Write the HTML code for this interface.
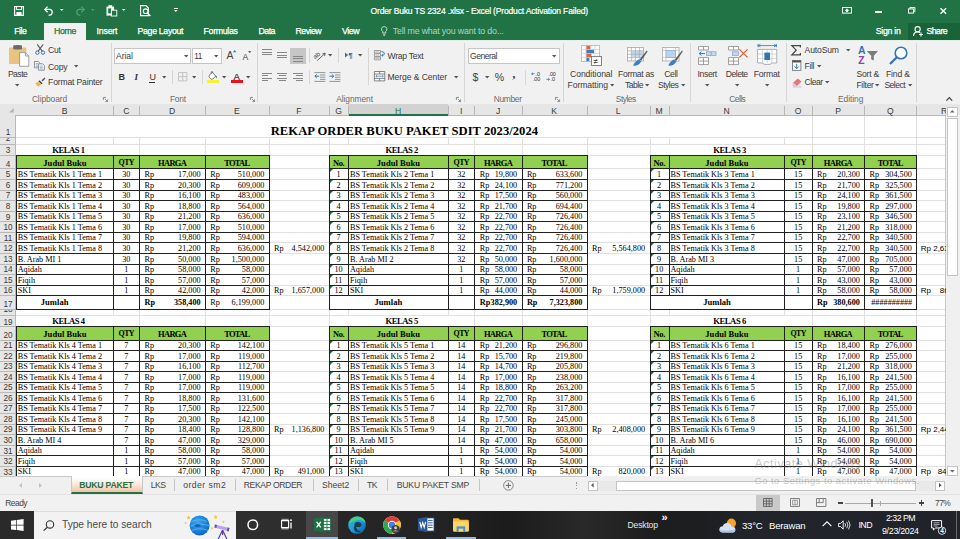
<!DOCTYPE html>
<html lang="id"><head><meta charset="utf-8"><title>Order Buku TS 2324 .xlsx - Excel</title>
<style>
html,body{margin:0;padding:0;}
body{width:960px;height:539px;overflow:hidden;position:relative;background:#fff;font-family:'Liberation Sans',sans-serif;}
div{position:absolute;box-sizing:border-box;}
.t{position:absolute;white-space:pre;line-height:1;}
svg{position:absolute;overflow:visible;}
.c{position:absolute;white-space:pre;line-height:1;font-family:'Liberation Serif',serif;font-size:8.2px;color:#000;}

</style></head><body>
<div style="left:0px;top:104px;width:946px;height:372px;background:#fff;overflow:hidden;"></div>
<div style="left:0px;top:104px;width:960px;height:12px;background:#e6e6e6;border-bottom:1px solid #b8b8b8;"></div>
<div style="left:0px;top:115px;width:16px;height:361px;background:#e6e6e6;border-right:1px solid #b8b8b8;"></div>
<div style="left:348px;top:104px;width:100px;height:12px;background:#d2d2d2;border-bottom:2px solid #217346;"></div>
<div style="left:113px;top:115px;width:1px;height:361px;background:#e0e0e0;"></div>
<div style="left:113px;top:106px;width:1px;height:10px;background:#b8b8b8;"></div>
<div style="left:139px;top:115px;width:1px;height:361px;background:#e0e0e0;"></div>
<div style="left:139px;top:106px;width:1px;height:10px;background:#b8b8b8;"></div>
<div style="left:205px;top:115px;width:1px;height:361px;background:#e0e0e0;"></div>
<div style="left:205px;top:106px;width:1px;height:10px;background:#b8b8b8;"></div>
<div style="left:269px;top:115px;width:1px;height:361px;background:#e0e0e0;"></div>
<div style="left:269px;top:106px;width:1px;height:10px;background:#b8b8b8;"></div>
<div style="left:329px;top:115px;width:1px;height:361px;background:#e0e0e0;"></div>
<div style="left:329px;top:106px;width:1px;height:10px;background:#b8b8b8;"></div>
<div style="left:348px;top:115px;width:1px;height:361px;background:#e0e0e0;"></div>
<div style="left:348px;top:106px;width:1px;height:10px;background:#b8b8b8;"></div>
<div style="left:448px;top:115px;width:1px;height:361px;background:#e0e0e0;"></div>
<div style="left:448px;top:106px;width:1px;height:10px;background:#b8b8b8;"></div>
<div style="left:474px;top:115px;width:1px;height:361px;background:#e0e0e0;"></div>
<div style="left:474px;top:106px;width:1px;height:10px;background:#b8b8b8;"></div>
<div style="left:522px;top:115px;width:1px;height:361px;background:#e0e0e0;"></div>
<div style="left:522px;top:106px;width:1px;height:10px;background:#b8b8b8;"></div>
<div style="left:587px;top:115px;width:1px;height:361px;background:#e0e0e0;"></div>
<div style="left:587px;top:106px;width:1px;height:10px;background:#b8b8b8;"></div>
<div style="left:650px;top:115px;width:1px;height:361px;background:#e0e0e0;"></div>
<div style="left:650px;top:106px;width:1px;height:10px;background:#b8b8b8;"></div>
<div style="left:669px;top:115px;width:1px;height:361px;background:#e0e0e0;"></div>
<div style="left:669px;top:106px;width:1px;height:10px;background:#b8b8b8;"></div>
<div style="left:784px;top:115px;width:1px;height:361px;background:#e0e0e0;"></div>
<div style="left:784px;top:106px;width:1px;height:10px;background:#b8b8b8;"></div>
<div style="left:812px;top:115px;width:1px;height:361px;background:#e0e0e0;"></div>
<div style="left:812px;top:106px;width:1px;height:10px;background:#b8b8b8;"></div>
<div style="left:864px;top:115px;width:1px;height:361px;background:#e0e0e0;"></div>
<div style="left:864px;top:106px;width:1px;height:10px;background:#b8b8b8;"></div>
<div style="left:916px;top:115px;width:1px;height:361px;background:#e0e0e0;"></div>
<div style="left:916px;top:106px;width:1px;height:10px;background:#b8b8b8;"></div>
<div style="left:946px;top:115px;width:1px;height:361px;background:#e0e0e0;"></div>
<div style="left:946px;top:106px;width:1px;height:10px;background:#b8b8b8;"></div>
<div style="left:16px;top:137px;width:930px;height:1px;background:#e0e0e0;"></div>
<div style="left:0px;top:137px;width:16px;height:1px;background:#b8b8b8;"></div>
<div style="left:16px;top:144px;width:930px;height:1px;background:#e0e0e0;"></div>
<div style="left:0px;top:144px;width:16px;height:1px;background:#b8b8b8;"></div>
<div style="left:16px;top:155px;width:930px;height:1px;background:#e0e0e0;"></div>
<div style="left:0px;top:155px;width:16px;height:1px;background:#b8b8b8;"></div>
<div style="left:16px;top:168px;width:930px;height:1px;background:#e0e0e0;"></div>
<div style="left:0px;top:168px;width:16px;height:1px;background:#b8b8b8;"></div>
<div style="left:16px;top:179px;width:930px;height:1px;background:#e0e0e0;"></div>
<div style="left:0px;top:179px;width:16px;height:1px;background:#b8b8b8;"></div>
<div style="left:16px;top:190px;width:930px;height:1px;background:#e0e0e0;"></div>
<div style="left:0px;top:190px;width:16px;height:1px;background:#b8b8b8;"></div>
<div style="left:16px;top:200px;width:930px;height:1px;background:#e0e0e0;"></div>
<div style="left:0px;top:200px;width:16px;height:1px;background:#b8b8b8;"></div>
<div style="left:16px;top:211px;width:930px;height:1px;background:#e0e0e0;"></div>
<div style="left:0px;top:211px;width:16px;height:1px;background:#b8b8b8;"></div>
<div style="left:16px;top:221px;width:930px;height:1px;background:#e0e0e0;"></div>
<div style="left:0px;top:221px;width:16px;height:1px;background:#b8b8b8;"></div>
<div style="left:16px;top:232px;width:930px;height:1px;background:#e0e0e0;"></div>
<div style="left:0px;top:232px;width:16px;height:1px;background:#b8b8b8;"></div>
<div style="left:16px;top:242px;width:930px;height:1px;background:#e0e0e0;"></div>
<div style="left:0px;top:242px;width:16px;height:1px;background:#b8b8b8;"></div>
<div style="left:16px;top:253px;width:930px;height:1px;background:#e0e0e0;"></div>
<div style="left:0px;top:253px;width:16px;height:1px;background:#b8b8b8;"></div>
<div style="left:16px;top:264px;width:930px;height:1px;background:#e0e0e0;"></div>
<div style="left:0px;top:264px;width:16px;height:1px;background:#b8b8b8;"></div>
<div style="left:16px;top:274px;width:930px;height:1px;background:#e0e0e0;"></div>
<div style="left:0px;top:274px;width:16px;height:1px;background:#b8b8b8;"></div>
<div style="left:16px;top:285px;width:930px;height:1px;background:#e0e0e0;"></div>
<div style="left:0px;top:285px;width:16px;height:1px;background:#b8b8b8;"></div>
<div style="left:16px;top:295px;width:930px;height:1px;background:#e0e0e0;"></div>
<div style="left:0px;top:295px;width:16px;height:1px;background:#b8b8b8;"></div>
<div style="left:16px;top:309px;width:930px;height:1px;background:#e0e0e0;"></div>
<div style="left:0px;top:309px;width:16px;height:1px;background:#b8b8b8;"></div>
<div style="left:16px;top:315px;width:930px;height:1px;background:#e0e0e0;"></div>
<div style="left:0px;top:315px;width:16px;height:1px;background:#b8b8b8;"></div>
<div style="left:16px;top:326px;width:930px;height:1px;background:#e0e0e0;"></div>
<div style="left:0px;top:326px;width:16px;height:1px;background:#b8b8b8;"></div>
<div style="left:16px;top:340px;width:930px;height:1px;background:#e0e0e0;"></div>
<div style="left:0px;top:340px;width:16px;height:1px;background:#b8b8b8;"></div>
<div style="left:16px;top:350px;width:930px;height:1px;background:#e0e0e0;"></div>
<div style="left:0px;top:350px;width:16px;height:1px;background:#b8b8b8;"></div>
<div style="left:16px;top:361px;width:930px;height:1px;background:#e0e0e0;"></div>
<div style="left:0px;top:361px;width:16px;height:1px;background:#b8b8b8;"></div>
<div style="left:16px;top:371px;width:930px;height:1px;background:#e0e0e0;"></div>
<div style="left:0px;top:371px;width:16px;height:1px;background:#b8b8b8;"></div>
<div style="left:16px;top:382px;width:930px;height:1px;background:#e0e0e0;"></div>
<div style="left:0px;top:382px;width:16px;height:1px;background:#b8b8b8;"></div>
<div style="left:16px;top:392px;width:930px;height:1px;background:#e0e0e0;"></div>
<div style="left:0px;top:392px;width:16px;height:1px;background:#b8b8b8;"></div>
<div style="left:16px;top:403px;width:930px;height:1px;background:#e0e0e0;"></div>
<div style="left:0px;top:403px;width:16px;height:1px;background:#b8b8b8;"></div>
<div style="left:16px;top:413px;width:930px;height:1px;background:#e0e0e0;"></div>
<div style="left:0px;top:413px;width:16px;height:1px;background:#b8b8b8;"></div>
<div style="left:16px;top:424px;width:930px;height:1px;background:#e0e0e0;"></div>
<div style="left:0px;top:424px;width:16px;height:1px;background:#b8b8b8;"></div>
<div style="left:16px;top:434px;width:930px;height:1px;background:#e0e0e0;"></div>
<div style="left:0px;top:434px;width:16px;height:1px;background:#b8b8b8;"></div>
<div style="left:16px;top:445px;width:930px;height:1px;background:#e0e0e0;"></div>
<div style="left:0px;top:445px;width:16px;height:1px;background:#b8b8b8;"></div>
<div style="left:16px;top:455px;width:930px;height:1px;background:#e0e0e0;"></div>
<div style="left:0px;top:455px;width:16px;height:1px;background:#b8b8b8;"></div>
<div style="left:16px;top:466px;width:930px;height:1px;background:#e0e0e0;"></div>
<div style="left:0px;top:466px;width:16px;height:1px;background:#b8b8b8;"></div>
<div style="left:16px;top:476px;width:930px;height:1px;background:#e0e0e0;"></div>
<div style="left:0px;top:476px;width:16px;height:1px;background:#b8b8b8;"></div>
<div style="left:17px;top:116px;width:795px;height:21px;background:#fff;"></div>
<div style="left:17px;top:145px;width:122px;height:10px;background:#fff;"></div>
<div style="left:17px;top:316px;width:122px;height:10px;background:#fff;"></div>
<div style="left:330px;top:145px;width:144px;height:10px;background:#fff;"></div>
<div style="left:330px;top:316px;width:144px;height:10px;background:#fff;"></div>
<div style="left:651px;top:145px;width:161px;height:10px;background:#fff;"></div>
<div style="left:651px;top:316px;width:161px;height:10px;background:#fff;"></div>
<div style="left:945px;top:116px;width:1px;height:360px;background:#c6c6c6;"></div>
<span class="t" style="left:54.625px;width:20px;text-align:center;top:105.7px;font:8.6px 'Liberation Sans', sans-serif;color:#3a3a3a;">B</span>
<span class="t" style="left:116.275px;width:20px;text-align:center;top:105.7px;font:8.6px 'Liberation Sans', sans-serif;color:#3a3a3a;">C</span>
<span class="t" style="left:162.15px;width:20px;text-align:center;top:105.7px;font:8.6px 'Liberation Sans', sans-serif;color:#3a3a3a;">D</span>
<span class="t" style="left:226.875px;width:20px;text-align:center;top:105.7px;font:8.6px 'Liberation Sans', sans-serif;color:#3a3a3a;">E</span>
<span class="t" style="left:288.75px;width:20px;text-align:center;top:105.7px;font:8.6px 'Liberation Sans', sans-serif;color:#3a3a3a;">F</span>
<span class="t" style="left:328.5px;width:20px;text-align:center;top:105.7px;font:8.6px 'Liberation Sans', sans-serif;color:#3a3a3a;">G</span>
<span class="t" style="left:388.125px;width:20px;text-align:center;top:105.7px;font:8.6px 'Liberation Sans', sans-serif;color:#217346;">H</span>
<span class="t" style="left:451.25px;width:20px;text-align:center;top:105.7px;font:8.6px 'Liberation Sans', sans-serif;color:#3a3a3a;">I</span>
<span class="t" style="left:488.05px;width:20px;text-align:center;top:105.7px;font:8.6px 'Liberation Sans', sans-serif;color:#3a3a3a;">J</span>
<span class="t" style="left:544.175px;width:20px;text-align:center;top:105.7px;font:8.6px 'Liberation Sans', sans-serif;color:#3a3a3a;">K</span>
<span class="t" style="left:608.125px;width:20px;text-align:center;top:105.7px;font:8.6px 'Liberation Sans', sans-serif;color:#3a3a3a;">L</span>
<span class="t" style="left:649.125px;width:20px;text-align:center;top:105.7px;font:8.6px 'Liberation Sans', sans-serif;color:#3a3a3a;">M</span>
<span class="t" style="left:716.625px;width:20px;text-align:center;top:105.7px;font:8.6px 'Liberation Sans', sans-serif;color:#3a3a3a;">N</span>
<span class="t" style="left:788.125px;width:20px;text-align:center;top:105.7px;font:8.6px 'Liberation Sans', sans-serif;color:#3a3a3a;">O</span>
<span class="t" style="left:828px;width:20px;text-align:center;top:105.7px;font:8.6px 'Liberation Sans', sans-serif;color:#3a3a3a;">P</span>
<span class="t" style="left:880.25px;width:20px;text-align:center;top:105.7px;font:8.6px 'Liberation Sans', sans-serif;color:#3a3a3a;">Q</span>
<div style="left:936px;top:104px;width:9.6px;height:11px;overflow:hidden;"><span class="t" style="left:5px;top:1.7px;font:8.6px 'Liberation Sans', sans-serif;color:#3a3a3a;">R</span></div>
<svg style="left:9px;top:108.4px" width="4.6" height="4.6"><path d="M4.6 0V4.6H0Z" fill="#b5b5b5"/></svg>
<span class="t" style="left:0;width:16px;text-align:center;top:128.2px;font:8.2px 'Liberation Sans', sans-serif;color:#3a3a3a;">1</span>
<div style="left:0;top:138px;width:16px;height:6px;overflow:hidden;"><span class="t" style="left:0;width:16px;text-align:center;top:-4px;font:8.2px 'Liberation Sans', sans-serif;color:#3a3a3a;">2</span></div>
<span class="t" style="left:0;width:16px;text-align:center;top:146.4px;font:8.2px 'Liberation Sans', sans-serif;color:#3a3a3a;">3</span>
<span class="t" style="left:0;width:16px;text-align:center;top:159.7px;font:8.2px 'Liberation Sans', sans-serif;color:#3a3a3a;">4</span>
<span class="t" style="left:0;width:16px;text-align:center;top:170.265px;font:8.2px 'Liberation Sans', sans-serif;color:#3a3a3a;">5</span>
<span class="t" style="left:0;width:16px;text-align:center;top:180.83px;font:8.2px 'Liberation Sans', sans-serif;color:#3a3a3a;">6</span>
<span class="t" style="left:0;width:16px;text-align:center;top:191.395px;font:8.2px 'Liberation Sans', sans-serif;color:#3a3a3a;">7</span>
<span class="t" style="left:0;width:16px;text-align:center;top:201.96px;font:8.2px 'Liberation Sans', sans-serif;color:#3a3a3a;">8</span>
<span class="t" style="left:0;width:16px;text-align:center;top:212.525px;font:8.2px 'Liberation Sans', sans-serif;color:#3a3a3a;">9</span>
<span class="t" style="left:0;width:16px;text-align:center;top:223.09px;font:8.2px 'Liberation Sans', sans-serif;color:#3a3a3a;">10</span>
<span class="t" style="left:0;width:16px;text-align:center;top:233.655px;font:8.2px 'Liberation Sans', sans-serif;color:#3a3a3a;">11</span>
<span class="t" style="left:0;width:16px;text-align:center;top:244.22px;font:8.2px 'Liberation Sans', sans-serif;color:#3a3a3a;">12</span>
<span class="t" style="left:0;width:16px;text-align:center;top:254.785px;font:8.2px 'Liberation Sans', sans-serif;color:#3a3a3a;">13</span>
<span class="t" style="left:0;width:16px;text-align:center;top:265.35px;font:8.2px 'Liberation Sans', sans-serif;color:#3a3a3a;">14</span>
<span class="t" style="left:0;width:16px;text-align:center;top:275.915px;font:8.2px 'Liberation Sans', sans-serif;color:#3a3a3a;">15</span>
<span class="t" style="left:0;width:16px;text-align:center;top:286.48px;font:8.2px 'Liberation Sans', sans-serif;color:#3a3a3a;">16</span>
<span class="t" style="left:0;width:16px;text-align:center;top:299.8px;font:8.2px 'Liberation Sans', sans-serif;color:#3a3a3a;">17</span>
<div style="left:0;top:310px;width:16px;height:5px;overflow:hidden;"><span class="t" style="left:0;width:16px;text-align:center;top:-5px;font:8.2px 'Liberation Sans', sans-serif;color:#3a3a3a;">18</span></div>
<span class="t" style="left:0;width:16px;text-align:center;top:317.6px;font:8.2px 'Liberation Sans', sans-serif;color:#3a3a3a;">19</span>
<span class="t" style="left:0;width:16px;text-align:center;top:330.9px;font:8.2px 'Liberation Sans', sans-serif;color:#3a3a3a;">20</span>
<span class="t" style="left:0;width:16px;text-align:center;top:341.41px;font:8.2px 'Liberation Sans', sans-serif;color:#3a3a3a;">21</span>
<span class="t" style="left:0;width:16px;text-align:center;top:351.92px;font:8.2px 'Liberation Sans', sans-serif;color:#3a3a3a;">22</span>
<span class="t" style="left:0;width:16px;text-align:center;top:362.43px;font:8.2px 'Liberation Sans', sans-serif;color:#3a3a3a;">23</span>
<span class="t" style="left:0;width:16px;text-align:center;top:372.94px;font:8.2px 'Liberation Sans', sans-serif;color:#3a3a3a;">24</span>
<span class="t" style="left:0;width:16px;text-align:center;top:383.45px;font:8.2px 'Liberation Sans', sans-serif;color:#3a3a3a;">25</span>
<span class="t" style="left:0;width:16px;text-align:center;top:393.96px;font:8.2px 'Liberation Sans', sans-serif;color:#3a3a3a;">26</span>
<span class="t" style="left:0;width:16px;text-align:center;top:404.47px;font:8.2px 'Liberation Sans', sans-serif;color:#3a3a3a;">27</span>
<span class="t" style="left:0;width:16px;text-align:center;top:414.98px;font:8.2px 'Liberation Sans', sans-serif;color:#3a3a3a;">28</span>
<span class="t" style="left:0;width:16px;text-align:center;top:425.49px;font:8.2px 'Liberation Sans', sans-serif;color:#3a3a3a;">29</span>
<span class="t" style="left:0;width:16px;text-align:center;top:436px;font:8.2px 'Liberation Sans', sans-serif;color:#3a3a3a;">30</span>
<span class="t" style="left:0;width:16px;text-align:center;top:446.51px;font:8.2px 'Liberation Sans', sans-serif;color:#3a3a3a;">31</span>
<span class="t" style="left:0;width:16px;text-align:center;top:457.02px;font:8.2px 'Liberation Sans', sans-serif;color:#3a3a3a;">32</span>
<span class="t" style="left:0;width:16px;text-align:center;top:467.53px;font:8.2px 'Liberation Sans', sans-serif;color:#3a3a3a;">33</span>
<span class="t" style="left:270.75px;top:123.6px;font:bold 12.6px 'Liberation Serif', serif;letter-spacing:0.029px;color:#000;">REKAP ORDER BUKU PAKET SDIT 2023/2024</span>
<div style="left:16px;top:155px;width:254px;height:155px;background:#fff;"></div>
<div style="left:16px;top:155px;width:254px;height:14px;background:#92d050;"></div>
<div style="left:16px;top:155px;width:254px;height:1px;background:#202020;"></div>
<div style="left:16px;top:168px;width:254px;height:1px;background:#202020;"></div>
<div style="left:16px;top:179px;width:254px;height:1px;background:#202020;"></div>
<div style="left:16px;top:190px;width:254px;height:1px;background:#202020;"></div>
<div style="left:16px;top:200px;width:254px;height:1px;background:#202020;"></div>
<div style="left:16px;top:211px;width:254px;height:1px;background:#202020;"></div>
<div style="left:16px;top:221px;width:254px;height:1px;background:#202020;"></div>
<div style="left:16px;top:232px;width:254px;height:1px;background:#202020;"></div>
<div style="left:16px;top:242px;width:254px;height:1px;background:#202020;"></div>
<div style="left:16px;top:253px;width:254px;height:1px;background:#202020;"></div>
<div style="left:16px;top:264px;width:254px;height:1px;background:#202020;"></div>
<div style="left:16px;top:274px;width:254px;height:1px;background:#202020;"></div>
<div style="left:16px;top:285px;width:254px;height:1px;background:#202020;"></div>
<div style="left:16px;top:295px;width:254px;height:1px;background:#202020;"></div>
<div style="left:16px;top:309px;width:254px;height:1px;background:#202020;"></div>
<div style="left:16px;top:155px;width:1px;height:154px;background:#202020;"></div>
<div style="left:113px;top:155px;width:1px;height:154px;background:#202020;"></div>
<div style="left:139px;top:155px;width:1px;height:154px;background:#202020;"></div>
<div style="left:205px;top:155px;width:1px;height:154px;background:#202020;"></div>
<div style="left:269px;top:155px;width:1px;height:155px;background:#202020;"></div>
<span class="t" style="left:52.3px;top:145.2px;font:bold 8.6px 'Liberation Serif', serif;letter-spacing:-0.466px;color:#000;">KELAS 1</span>
<span class="t" style="left:43.325px;top:157.78px;font:bold 8.5px 'Liberation Serif', serif;letter-spacing:0.047px;color:#000;">Judul Buku</span>
<span class="t" style="left:118.575px;top:158.23px;font:bold 7.9px 'Liberation Serif', serif;letter-spacing:-0.555px;color:#000;">QTY</span>
<span class="t" style="left:158px;top:157.78px;font:bold 8.5px 'Liberation Serif', serif;letter-spacing:-0.685px;color:#000;">HARGA</span>
<span class="t" style="left:224.275px;top:157.78px;font:bold 8.5px 'Liberation Serif', serif;letter-spacing:-0.796px;color:#000;">TOTAL</span>
<span class="c" style="left:17.7px;width:97.25px;top:171.2px;text-align:left;font-size:8.2px;">BS Tematik Kls 1 Tema 1</span>
<span class="c" style="left:113.25px;width:26.05px;top:171.2px;text-align:center;font-size:8.2px;">30</span>
<span class="c" style="left:144.6px;width:20px;top:171.2px;text-align:left;font-size:8.2px;">Rp</span>
<span class="c" style="left:139.3px;width:61.3px;top:171.2px;text-align:right;font-size:8.2px;">17,000</span>
<span class="c" style="left:210.3px;width:20px;top:171.2px;text-align:left;font-size:8.2px;">Rp</span>
<span class="c" style="left:205px;width:59.35px;top:171.2px;text-align:right;font-size:8.2px;">510,000</span>
<span class="c" style="left:17.7px;width:97.25px;top:182.2px;text-align:left;font-size:8.2px;">BS Tematik Kls 1 Tema 2</span>
<span class="c" style="left:113.25px;width:26.05px;top:182.2px;text-align:center;font-size:8.2px;">30</span>
<span class="c" style="left:144.6px;width:20px;top:182.2px;text-align:left;font-size:8.2px;">Rp</span>
<span class="c" style="left:139.3px;width:61.3px;top:182.2px;text-align:right;font-size:8.2px;">20,300</span>
<span class="c" style="left:210.3px;width:20px;top:182.2px;text-align:left;font-size:8.2px;">Rp</span>
<span class="c" style="left:205px;width:59.35px;top:182.2px;text-align:right;font-size:8.2px;">609,000</span>
<span class="c" style="left:17.7px;width:97.25px;top:192.2px;text-align:left;font-size:8.2px;">BS Tematik Kls 1 Tema 3</span>
<span class="c" style="left:113.25px;width:26.05px;top:192.2px;text-align:center;font-size:8.2px;">30</span>
<span class="c" style="left:144.6px;width:20px;top:192.2px;text-align:left;font-size:8.2px;">Rp</span>
<span class="c" style="left:139.3px;width:61.3px;top:192.2px;text-align:right;font-size:8.2px;">16,100</span>
<span class="c" style="left:210.3px;width:20px;top:192.2px;text-align:left;font-size:8.2px;">Rp</span>
<span class="c" style="left:205px;width:59.35px;top:192.2px;text-align:right;font-size:8.2px;">483,000</span>
<span class="c" style="left:17.7px;width:97.25px;top:203.2px;text-align:left;font-size:8.2px;">BS Tematik Kls 1 Tema 4</span>
<span class="c" style="left:113.25px;width:26.05px;top:203.2px;text-align:center;font-size:8.2px;">30</span>
<span class="c" style="left:144.6px;width:20px;top:203.2px;text-align:left;font-size:8.2px;">Rp</span>
<span class="c" style="left:139.3px;width:61.3px;top:203.2px;text-align:right;font-size:8.2px;">18,800</span>
<span class="c" style="left:210.3px;width:20px;top:203.2px;text-align:left;font-size:8.2px;">Rp</span>
<span class="c" style="left:205px;width:59.35px;top:203.2px;text-align:right;font-size:8.2px;">564,000</span>
<span class="c" style="left:17.7px;width:97.25px;top:213.2px;text-align:left;font-size:8.2px;">BS Tematik Kls 1 Tema 5</span>
<span class="c" style="left:113.25px;width:26.05px;top:213.2px;text-align:center;font-size:8.2px;">30</span>
<span class="c" style="left:144.6px;width:20px;top:213.2px;text-align:left;font-size:8.2px;">Rp</span>
<span class="c" style="left:139.3px;width:61.3px;top:213.2px;text-align:right;font-size:8.2px;">21,200</span>
<span class="c" style="left:210.3px;width:20px;top:213.2px;text-align:left;font-size:8.2px;">Rp</span>
<span class="c" style="left:205px;width:59.35px;top:213.2px;text-align:right;font-size:8.2px;">636,000</span>
<span class="c" style="left:17.7px;width:97.25px;top:224.2px;text-align:left;font-size:8.2px;">BS Tematik Kls 1 Tema 6</span>
<span class="c" style="left:113.25px;width:26.05px;top:224.2px;text-align:center;font-size:8.2px;">30</span>
<span class="c" style="left:144.6px;width:20px;top:224.2px;text-align:left;font-size:8.2px;">Rp</span>
<span class="c" style="left:139.3px;width:61.3px;top:224.2px;text-align:right;font-size:8.2px;">17,000</span>
<span class="c" style="left:210.3px;width:20px;top:224.2px;text-align:left;font-size:8.2px;">Rp</span>
<span class="c" style="left:205px;width:59.35px;top:224.2px;text-align:right;font-size:8.2px;">510,000</span>
<span class="c" style="left:17.7px;width:97.25px;top:234.2px;text-align:left;font-size:8.2px;">BS Tematik Kls 1 Tema 7</span>
<span class="c" style="left:113.25px;width:26.05px;top:234.2px;text-align:center;font-size:8.2px;">30</span>
<span class="c" style="left:144.6px;width:20px;top:234.2px;text-align:left;font-size:8.2px;">Rp</span>
<span class="c" style="left:139.3px;width:61.3px;top:234.2px;text-align:right;font-size:8.2px;">19,800</span>
<span class="c" style="left:210.3px;width:20px;top:234.2px;text-align:left;font-size:8.2px;">Rp</span>
<span class="c" style="left:205px;width:59.35px;top:234.2px;text-align:right;font-size:8.2px;">594,000</span>
<span class="c" style="left:17.7px;width:97.25px;top:245.2px;text-align:left;font-size:8.2px;">BS Tematik Kls 1 Tema 8</span>
<span class="c" style="left:113.25px;width:26.05px;top:245.2px;text-align:center;font-size:8.2px;">30</span>
<span class="c" style="left:144.6px;width:20px;top:245.2px;text-align:left;font-size:8.2px;">Rp</span>
<span class="c" style="left:139.3px;width:61.3px;top:245.2px;text-align:right;font-size:8.2px;">21,200</span>
<span class="c" style="left:210.3px;width:20px;top:245.2px;text-align:left;font-size:8.2px;">Rp</span>
<span class="c" style="left:205px;width:59.35px;top:245.2px;text-align:right;font-size:8.2px;">636,000</span>
<span class="c" style="left:274.05px;width:20px;top:245.2px;text-align:left;font-size:8.2px;">Rp</span>
<span class="c" style="left:268.75px;width:55.6px;top:245.2px;text-align:right;font-size:8.2px;">4,542,000</span>
<span class="c" style="left:17.7px;width:97.25px;top:256.2px;text-align:left;font-size:8.2px;">B. Arab MI 1</span>
<span class="c" style="left:113.25px;width:26.05px;top:256.2px;text-align:center;font-size:8.2px;">30</span>
<span class="c" style="left:144.6px;width:20px;top:256.2px;text-align:left;font-size:8.2px;">Rp</span>
<span class="c" style="left:139.3px;width:61.3px;top:256.2px;text-align:right;font-size:8.2px;">50,000</span>
<span class="c" style="left:210.3px;width:20px;top:256.2px;text-align:left;font-size:8.2px;">Rp</span>
<span class="c" style="left:205px;width:59.35px;top:256.2px;text-align:right;font-size:8.2px;">1,500,000</span>
<span class="c" style="left:17.7px;width:97.25px;top:266.2px;text-align:left;font-size:8.2px;">Aqidah</span>
<span class="c" style="left:113.25px;width:26.05px;top:266.2px;text-align:center;font-size:8.2px;">1</span>
<span class="c" style="left:144.6px;width:20px;top:266.2px;text-align:left;font-size:8.2px;">Rp</span>
<span class="c" style="left:139.3px;width:61.3px;top:266.2px;text-align:right;font-size:8.2px;">58,000</span>
<span class="c" style="left:210.3px;width:20px;top:266.2px;text-align:left;font-size:8.2px;">Rp</span>
<span class="c" style="left:205px;width:59.35px;top:266.2px;text-align:right;font-size:8.2px;">58,000</span>
<span class="c" style="left:17.7px;width:97.25px;top:277.2px;text-align:left;font-size:8.2px;">Fiqih</span>
<span class="c" style="left:113.25px;width:26.05px;top:277.2px;text-align:center;font-size:8.2px;">1</span>
<span class="c" style="left:144.6px;width:20px;top:277.2px;text-align:left;font-size:8.2px;">Rp</span>
<span class="c" style="left:139.3px;width:61.3px;top:277.2px;text-align:right;font-size:8.2px;">57,000</span>
<span class="c" style="left:210.3px;width:20px;top:277.2px;text-align:left;font-size:8.2px;">Rp</span>
<span class="c" style="left:205px;width:59.35px;top:277.2px;text-align:right;font-size:8.2px;">57,000</span>
<span class="c" style="left:17.7px;width:97.25px;top:287.2px;text-align:left;font-size:8.2px;">SKI</span>
<span class="c" style="left:113.25px;width:26.05px;top:287.2px;text-align:center;font-size:8.2px;">1</span>
<span class="c" style="left:144.6px;width:20px;top:287.2px;text-align:left;font-size:8.2px;">Rp</span>
<span class="c" style="left:139.3px;width:61.3px;top:287.2px;text-align:right;font-size:8.2px;">42,000</span>
<span class="c" style="left:210.3px;width:20px;top:287.2px;text-align:left;font-size:8.2px;">Rp</span>
<span class="c" style="left:205px;width:59.35px;top:287.2px;text-align:right;font-size:8.2px;">42,000</span>
<span class="c" style="left:274.05px;width:20px;top:287.2px;text-align:left;font-size:8.2px;">Rp</span>
<span class="c" style="left:268.75px;width:55.6px;top:287.2px;text-align:right;font-size:8.2px;">1,657,000</span>
<span class="c" style="left:6px;width:97.25px;top:298px;text-align:center;font-size:8.6px;font-weight:bold;">Jumlah</span>
<span class="c" style="left:144.6px;width:20px;top:299.2px;text-align:left;font-size:8.2px;font-weight:bold;">Rp</span>
<span class="c" style="left:139.3px;width:61.3px;top:299.2px;text-align:right;font-size:8.2px;font-weight:bold;">358,400</span>
<span class="c" style="left:210.3px;width:20px;top:299.2px;text-align:left;font-size:8.2px;">Rp</span>
<span class="c" style="left:205px;width:59.35px;top:299.2px;text-align:right;font-size:8.2px;">6,199,000</span>
<div style="left:329px;top:155px;width:259px;height:155px;background:#fff;"></div>
<div style="left:329px;top:155px;width:259px;height:14px;background:#92d050;"></div>
<div style="left:329px;top:155px;width:259px;height:1px;background:#202020;"></div>
<div style="left:329px;top:168px;width:259px;height:1px;background:#202020;"></div>
<div style="left:329px;top:179px;width:259px;height:1px;background:#202020;"></div>
<div style="left:329px;top:190px;width:259px;height:1px;background:#202020;"></div>
<div style="left:329px;top:200px;width:259px;height:1px;background:#202020;"></div>
<div style="left:329px;top:211px;width:259px;height:1px;background:#202020;"></div>
<div style="left:329px;top:221px;width:259px;height:1px;background:#202020;"></div>
<div style="left:329px;top:232px;width:259px;height:1px;background:#202020;"></div>
<div style="left:329px;top:242px;width:259px;height:1px;background:#202020;"></div>
<div style="left:329px;top:253px;width:259px;height:1px;background:#202020;"></div>
<div style="left:329px;top:264px;width:259px;height:1px;background:#202020;"></div>
<div style="left:329px;top:274px;width:259px;height:1px;background:#202020;"></div>
<div style="left:329px;top:285px;width:259px;height:1px;background:#202020;"></div>
<div style="left:329px;top:295px;width:259px;height:1px;background:#202020;"></div>
<div style="left:329px;top:309px;width:259px;height:1px;background:#202020;"></div>
<div style="left:329px;top:155px;width:1px;height:154px;background:#202020;"></div>
<div style="left:348px;top:155px;width:1px;height:140px;background:#202020;"></div>
<div style="left:448px;top:155px;width:1px;height:154px;background:#202020;"></div>
<div style="left:474px;top:155px;width:1px;height:154px;background:#202020;"></div>
<div style="left:522px;top:155px;width:1px;height:154px;background:#202020;"></div>
<div style="left:587px;top:155px;width:1px;height:155px;background:#202020;"></div>
<span class="t" style="left:385.5px;top:145.2px;font:bold 8.6px 'Liberation Serif', serif;letter-spacing:-0.466px;color:#000;">KELAS 2</span>
<span class="t" style="left:332.925px;top:157.78px;font:bold 8.5px 'Liberation Serif', serif;letter-spacing:-0.383px;color:#000;">No.</span>
<span class="t" style="left:376.825px;top:157.78px;font:bold 8.5px 'Liberation Serif', serif;letter-spacing:0.047px;color:#000;">Judul Buku</span>
<span class="t" style="left:453.55px;top:158.23px;font:bold 7.9px 'Liberation Serif', serif;letter-spacing:-0.555px;color:#000;">QTY</span>
<span class="t" style="left:483.9px;top:157.78px;font:bold 8.5px 'Liberation Serif', serif;letter-spacing:-0.685px;color:#000;">HARGA</span>
<span class="t" style="left:541.575px;top:157.78px;font:bold 8.5px 'Liberation Serif', serif;letter-spacing:-0.796px;color:#000;">TOTAL</span>
<span class="c" style="left:328.75px;width:19.5px;top:171.2px;text-align:center;font-size:8.2px;">1</span>
<svg style="left:330px;top:169px" width="3" height="3"><path d="M0 0H3L0 3Z" fill="#1e6b3c"/></svg>
<span class="c" style="left:349.95px;width:99.75px;top:171.2px;text-align:left;font-size:8.2px;">BS Tematik Kls 2 Tema 1</span>
<span class="c" style="left:448px;width:26.5px;top:171.2px;text-align:center;font-size:8.2px;">32</span>
<span class="c" style="left:479.8px;width:20px;top:171.2px;text-align:left;font-size:8.2px;">Rp</span>
<span class="c" style="left:474.5px;width:42.7px;top:171.2px;text-align:right;font-size:8.2px;">19,800</span>
<span class="c" style="left:526.9px;width:20px;top:171.2px;text-align:left;font-size:8.2px;">Rp</span>
<span class="c" style="left:521.6px;width:60.75px;top:171.2px;text-align:right;font-size:8.2px;">633,600</span>
<span class="c" style="left:328.75px;width:19.5px;top:182.2px;text-align:center;font-size:8.2px;">2</span>
<svg style="left:330px;top:180px" width="3" height="3"><path d="M0 0H3L0 3Z" fill="#1e6b3c"/></svg>
<span class="c" style="left:349.95px;width:99.75px;top:182.2px;text-align:left;font-size:8.2px;">BS Tematik Kls 2 Tema 2</span>
<span class="c" style="left:448px;width:26.5px;top:182.2px;text-align:center;font-size:8.2px;">32</span>
<span class="c" style="left:479.8px;width:20px;top:182.2px;text-align:left;font-size:8.2px;">Rp</span>
<span class="c" style="left:474.5px;width:42.7px;top:182.2px;text-align:right;font-size:8.2px;">24,100</span>
<span class="c" style="left:526.9px;width:20px;top:182.2px;text-align:left;font-size:8.2px;">Rp</span>
<span class="c" style="left:521.6px;width:60.75px;top:182.2px;text-align:right;font-size:8.2px;">771,200</span>
<span class="c" style="left:328.75px;width:19.5px;top:192.2px;text-align:center;font-size:8.2px;">3</span>
<svg style="left:330px;top:191px" width="3" height="3"><path d="M0 0H3L0 3Z" fill="#1e6b3c"/></svg>
<span class="c" style="left:349.95px;width:99.75px;top:192.2px;text-align:left;font-size:8.2px;">BS Tematik Kls 2 Tema 3</span>
<span class="c" style="left:448px;width:26.5px;top:192.2px;text-align:center;font-size:8.2px;">32</span>
<span class="c" style="left:479.8px;width:20px;top:192.2px;text-align:left;font-size:8.2px;">Rp</span>
<span class="c" style="left:474.5px;width:42.7px;top:192.2px;text-align:right;font-size:8.2px;">17,500</span>
<span class="c" style="left:526.9px;width:20px;top:192.2px;text-align:left;font-size:8.2px;">Rp</span>
<span class="c" style="left:521.6px;width:60.75px;top:192.2px;text-align:right;font-size:8.2px;">560,000</span>
<span class="c" style="left:328.75px;width:19.5px;top:203.2px;text-align:center;font-size:8.2px;">4</span>
<svg style="left:330px;top:201px" width="3" height="3"><path d="M0 0H3L0 3Z" fill="#1e6b3c"/></svg>
<span class="c" style="left:349.95px;width:99.75px;top:203.2px;text-align:left;font-size:8.2px;">BS Tematik Kls 2 Tema 4</span>
<span class="c" style="left:448px;width:26.5px;top:203.2px;text-align:center;font-size:8.2px;">32</span>
<span class="c" style="left:479.8px;width:20px;top:203.2px;text-align:left;font-size:8.2px;">Rp</span>
<span class="c" style="left:474.5px;width:42.7px;top:203.2px;text-align:right;font-size:8.2px;">21,700</span>
<span class="c" style="left:526.9px;width:20px;top:203.2px;text-align:left;font-size:8.2px;">Rp</span>
<span class="c" style="left:521.6px;width:60.75px;top:203.2px;text-align:right;font-size:8.2px;">694,400</span>
<span class="c" style="left:328.75px;width:19.5px;top:213.2px;text-align:center;font-size:8.2px;">5</span>
<svg style="left:330px;top:212px" width="3" height="3"><path d="M0 0H3L0 3Z" fill="#1e6b3c"/></svg>
<span class="c" style="left:349.95px;width:99.75px;top:213.2px;text-align:left;font-size:8.2px;">BS Tematik Kls 2 Tema 5</span>
<span class="c" style="left:448px;width:26.5px;top:213.2px;text-align:center;font-size:8.2px;">32</span>
<span class="c" style="left:479.8px;width:20px;top:213.2px;text-align:left;font-size:8.2px;">Rp</span>
<span class="c" style="left:474.5px;width:42.7px;top:213.2px;text-align:right;font-size:8.2px;">22,700</span>
<span class="c" style="left:526.9px;width:20px;top:213.2px;text-align:left;font-size:8.2px;">Rp</span>
<span class="c" style="left:521.6px;width:60.75px;top:213.2px;text-align:right;font-size:8.2px;">726,400</span>
<span class="c" style="left:328.75px;width:19.5px;top:224.2px;text-align:center;font-size:8.2px;">6</span>
<svg style="left:330px;top:222px" width="3" height="3"><path d="M0 0H3L0 3Z" fill="#1e6b3c"/></svg>
<span class="c" style="left:349.95px;width:99.75px;top:224.2px;text-align:left;font-size:8.2px;">BS Tematik Kls 2 Tema 6</span>
<span class="c" style="left:448px;width:26.5px;top:224.2px;text-align:center;font-size:8.2px;">32</span>
<span class="c" style="left:479.8px;width:20px;top:224.2px;text-align:left;font-size:8.2px;">Rp</span>
<span class="c" style="left:474.5px;width:42.7px;top:224.2px;text-align:right;font-size:8.2px;">22,700</span>
<span class="c" style="left:526.9px;width:20px;top:224.2px;text-align:left;font-size:8.2px;">Rp</span>
<span class="c" style="left:521.6px;width:60.75px;top:224.2px;text-align:right;font-size:8.2px;">726,400</span>
<span class="c" style="left:328.75px;width:19.5px;top:234.2px;text-align:center;font-size:8.2px;">7</span>
<svg style="left:330px;top:233px" width="3" height="3"><path d="M0 0H3L0 3Z" fill="#1e6b3c"/></svg>
<span class="c" style="left:349.95px;width:99.75px;top:234.2px;text-align:left;font-size:8.2px;">BS Tematik Kls 2 Tema 7</span>
<span class="c" style="left:448px;width:26.5px;top:234.2px;text-align:center;font-size:8.2px;">32</span>
<span class="c" style="left:479.8px;width:20px;top:234.2px;text-align:left;font-size:8.2px;">Rp</span>
<span class="c" style="left:474.5px;width:42.7px;top:234.2px;text-align:right;font-size:8.2px;">22,700</span>
<span class="c" style="left:526.9px;width:20px;top:234.2px;text-align:left;font-size:8.2px;">Rp</span>
<span class="c" style="left:521.6px;width:60.75px;top:234.2px;text-align:right;font-size:8.2px;">726,400</span>
<span class="c" style="left:328.75px;width:19.5px;top:245.2px;text-align:center;font-size:8.2px;">8</span>
<svg style="left:330px;top:243px" width="3" height="3"><path d="M0 0H3L0 3Z" fill="#1e6b3c"/></svg>
<span class="c" style="left:349.95px;width:99.75px;top:245.2px;text-align:left;font-size:8.2px;">BS Tematik Kls 2 Tema 8</span>
<span class="c" style="left:448px;width:26.5px;top:245.2px;text-align:center;font-size:8.2px;">32</span>
<span class="c" style="left:479.8px;width:20px;top:245.2px;text-align:left;font-size:8.2px;">Rp</span>
<span class="c" style="left:474.5px;width:42.7px;top:245.2px;text-align:right;font-size:8.2px;">22,700</span>
<span class="c" style="left:526.9px;width:20px;top:245.2px;text-align:left;font-size:8.2px;">Rp</span>
<span class="c" style="left:521.6px;width:60.75px;top:245.2px;text-align:right;font-size:8.2px;">726,400</span>
<span class="c" style="left:592.05px;width:20px;top:245.2px;text-align:left;font-size:8.2px;">Rp</span>
<span class="c" style="left:586.75px;width:58.35px;top:245.2px;text-align:right;font-size:8.2px;">5,564,800</span>
<span class="c" style="left:328.75px;width:19.5px;top:256.2px;text-align:center;font-size:8.2px;">9</span>
<svg style="left:330px;top:254px" width="3" height="3"><path d="M0 0H3L0 3Z" fill="#1e6b3c"/></svg>
<span class="c" style="left:349.95px;width:99.75px;top:256.2px;text-align:left;font-size:8.2px;">B. Arab MI 2</span>
<span class="c" style="left:448px;width:26.5px;top:256.2px;text-align:center;font-size:8.2px;">32</span>
<span class="c" style="left:479.8px;width:20px;top:256.2px;text-align:left;font-size:8.2px;">Rp</span>
<span class="c" style="left:474.5px;width:42.7px;top:256.2px;text-align:right;font-size:8.2px;">50,000</span>
<span class="c" style="left:526.9px;width:20px;top:256.2px;text-align:left;font-size:8.2px;">Rp</span>
<span class="c" style="left:521.6px;width:60.75px;top:256.2px;text-align:right;font-size:8.2px;">1,600,000</span>
<span class="c" style="left:328.75px;width:19.5px;top:266.2px;text-align:center;font-size:8.2px;">10</span>
<svg style="left:330px;top:265px" width="3" height="3"><path d="M0 0H3L0 3Z" fill="#1e6b3c"/></svg>
<span class="c" style="left:349.95px;width:99.75px;top:266.2px;text-align:left;font-size:8.2px;">Aqidah</span>
<span class="c" style="left:448px;width:26.5px;top:266.2px;text-align:center;font-size:8.2px;">1</span>
<span class="c" style="left:479.8px;width:20px;top:266.2px;text-align:left;font-size:8.2px;">Rp</span>
<span class="c" style="left:474.5px;width:42.7px;top:266.2px;text-align:right;font-size:8.2px;">58,000</span>
<span class="c" style="left:526.9px;width:20px;top:266.2px;text-align:left;font-size:8.2px;">Rp</span>
<span class="c" style="left:521.6px;width:60.75px;top:266.2px;text-align:right;font-size:8.2px;">58,000</span>
<span class="c" style="left:328.75px;width:19.5px;top:277.2px;text-align:center;font-size:8.2px;">11</span>
<svg style="left:330px;top:275px" width="3" height="3"><path d="M0 0H3L0 3Z" fill="#1e6b3c"/></svg>
<span class="c" style="left:349.95px;width:99.75px;top:277.2px;text-align:left;font-size:8.2px;">Fiqih</span>
<span class="c" style="left:448px;width:26.5px;top:277.2px;text-align:center;font-size:8.2px;">1</span>
<span class="c" style="left:479.8px;width:20px;top:277.2px;text-align:left;font-size:8.2px;">Rp</span>
<span class="c" style="left:474.5px;width:42.7px;top:277.2px;text-align:right;font-size:8.2px;">57,000</span>
<span class="c" style="left:526.9px;width:20px;top:277.2px;text-align:left;font-size:8.2px;">Rp</span>
<span class="c" style="left:521.6px;width:60.75px;top:277.2px;text-align:right;font-size:8.2px;">57,000</span>
<span class="c" style="left:328.75px;width:19.5px;top:287.2px;text-align:center;font-size:8.2px;">12</span>
<svg style="left:330px;top:286px" width="3" height="3"><path d="M0 0H3L0 3Z" fill="#1e6b3c"/></svg>
<span class="c" style="left:349.95px;width:99.75px;top:287.2px;text-align:left;font-size:8.2px;">SKI</span>
<span class="c" style="left:448px;width:26.5px;top:287.2px;text-align:center;font-size:8.2px;">1</span>
<span class="c" style="left:479.8px;width:20px;top:287.2px;text-align:left;font-size:8.2px;">Rp</span>
<span class="c" style="left:474.5px;width:42.7px;top:287.2px;text-align:right;font-size:8.2px;">44,000</span>
<span class="c" style="left:526.9px;width:20px;top:287.2px;text-align:left;font-size:8.2px;">Rp</span>
<span class="c" style="left:521.6px;width:60.75px;top:287.2px;text-align:right;font-size:8.2px;">44,000</span>
<span class="c" style="left:592.05px;width:20px;top:287.2px;text-align:left;font-size:8.2px;">Rp</span>
<span class="c" style="left:586.75px;width:58.35px;top:287.2px;text-align:right;font-size:8.2px;">1,759,000</span>
<span class="c" style="left:328.75px;width:119.25px;top:298px;text-align:center;font-size:8.6px;font-weight:bold;">Jumlah</span>
<span class="c" style="left:479.8px;width:20px;top:299.2px;text-align:left;font-size:8.2px;font-weight:bold;">Rp</span>
<span class="c" style="left:474.5px;width:42.7px;top:299.2px;text-align:right;font-size:8.2px;font-weight:bold;">382,900</span>
<span class="c" style="left:526.9px;width:20px;top:299.2px;text-align:left;font-size:8.2px;font-weight:bold;">Rp</span>
<span class="c" style="left:521.6px;width:60.75px;top:299.2px;text-align:right;font-size:8.2px;font-weight:bold;">7,323,800</span>
<div style="left:650px;top:155px;width:267px;height:155px;background:#fff;"></div>
<div style="left:650px;top:155px;width:267px;height:14px;background:#92d050;"></div>
<div style="left:650px;top:155px;width:267px;height:1px;background:#202020;"></div>
<div style="left:650px;top:168px;width:267px;height:1px;background:#202020;"></div>
<div style="left:650px;top:179px;width:267px;height:1px;background:#202020;"></div>
<div style="left:650px;top:190px;width:267px;height:1px;background:#202020;"></div>
<div style="left:650px;top:200px;width:267px;height:1px;background:#202020;"></div>
<div style="left:650px;top:211px;width:267px;height:1px;background:#202020;"></div>
<div style="left:650px;top:221px;width:267px;height:1px;background:#202020;"></div>
<div style="left:650px;top:232px;width:267px;height:1px;background:#202020;"></div>
<div style="left:650px;top:242px;width:267px;height:1px;background:#202020;"></div>
<div style="left:650px;top:253px;width:267px;height:1px;background:#202020;"></div>
<div style="left:650px;top:264px;width:267px;height:1px;background:#202020;"></div>
<div style="left:650px;top:274px;width:267px;height:1px;background:#202020;"></div>
<div style="left:650px;top:285px;width:267px;height:1px;background:#202020;"></div>
<div style="left:650px;top:295px;width:267px;height:1px;background:#202020;"></div>
<div style="left:650px;top:309px;width:267px;height:1px;background:#202020;"></div>
<div style="left:650px;top:155px;width:1px;height:154px;background:#202020;"></div>
<div style="left:669px;top:155px;width:1px;height:140px;background:#202020;"></div>
<div style="left:784px;top:155px;width:1px;height:154px;background:#202020;"></div>
<div style="left:812px;top:155px;width:1px;height:154px;background:#202020;"></div>
<div style="left:864px;top:155px;width:1px;height:154px;background:#202020;"></div>
<div style="left:916px;top:155px;width:1px;height:155px;background:#202020;"></div>
<span class="t" style="left:713.25px;top:145.2px;font:bold 8.6px 'Liberation Serif', serif;letter-spacing:-0.432px;color:#000;">KELAS 3</span>
<span class="t" style="left:653.55px;top:157.78px;font:bold 8.5px 'Liberation Serif', serif;letter-spacing:-0.383px;color:#000;">No.</span>
<span class="t" style="left:705.325px;top:157.78px;font:bold 8.5px 'Liberation Serif', serif;letter-spacing:0.047px;color:#000;">Judul Buku</span>
<span class="t" style="left:790.425px;top:158.23px;font:bold 7.9px 'Liberation Serif', serif;letter-spacing:-0.555px;color:#000;">QTY</span>
<span class="t" style="left:823.85px;top:157.78px;font:bold 8.5px 'Liberation Serif', serif;letter-spacing:-0.685px;color:#000;">HARGA</span>
<span class="t" style="left:877.65px;top:157.78px;font:bold 8.5px 'Liberation Serif', serif;letter-spacing:-0.796px;color:#000;">TOTAL</span>
<span class="c" style="left:649.5px;width:19.25px;top:171.2px;text-align:center;font-size:8.2px;">1</span>
<svg style="left:651px;top:169px" width="3" height="3"><path d="M0 0H3L0 3Z" fill="#1e6b3c"/></svg>
<span class="c" style="left:670.45px;width:115.75px;top:171.2px;text-align:left;font-size:8.2px;">BS Tematik Kls 3 Tema 1</span>
<span class="c" style="left:784.5px;width:27.25px;top:171.2px;text-align:center;font-size:8.2px;">15</span>
<span class="c" style="left:817.05px;width:20px;top:171.2px;text-align:left;font-size:8.2px;">Rp</span>
<span class="c" style="left:811.75px;width:48.1px;top:171.2px;text-align:right;font-size:8.2px;">20,300</span>
<span class="c" style="left:869.55px;width:20px;top:171.2px;text-align:left;font-size:8.2px;">Rp</span>
<span class="c" style="left:864.25px;width:47.6px;top:171.2px;text-align:right;font-size:8.2px;">304,500</span>
<span class="c" style="left:649.5px;width:19.25px;top:182.2px;text-align:center;font-size:8.2px;">2</span>
<svg style="left:651px;top:180px" width="3" height="3"><path d="M0 0H3L0 3Z" fill="#1e6b3c"/></svg>
<span class="c" style="left:670.45px;width:115.75px;top:182.2px;text-align:left;font-size:8.2px;">BS Tematik Kls 3 Tema 2</span>
<span class="c" style="left:784.5px;width:27.25px;top:182.2px;text-align:center;font-size:8.2px;">15</span>
<span class="c" style="left:817.05px;width:20px;top:182.2px;text-align:left;font-size:8.2px;">Rp</span>
<span class="c" style="left:811.75px;width:48.1px;top:182.2px;text-align:right;font-size:8.2px;">21,700</span>
<span class="c" style="left:869.55px;width:20px;top:182.2px;text-align:left;font-size:8.2px;">Rp</span>
<span class="c" style="left:864.25px;width:47.6px;top:182.2px;text-align:right;font-size:8.2px;">325,500</span>
<span class="c" style="left:649.5px;width:19.25px;top:192.2px;text-align:center;font-size:8.2px;">3</span>
<svg style="left:651px;top:191px" width="3" height="3"><path d="M0 0H3L0 3Z" fill="#1e6b3c"/></svg>
<span class="c" style="left:670.45px;width:115.75px;top:192.2px;text-align:left;font-size:8.2px;">BS Tematik Kls 3 Tema 3</span>
<span class="c" style="left:784.5px;width:27.25px;top:192.2px;text-align:center;font-size:8.2px;">15</span>
<span class="c" style="left:817.05px;width:20px;top:192.2px;text-align:left;font-size:8.2px;">Rp</span>
<span class="c" style="left:811.75px;width:48.1px;top:192.2px;text-align:right;font-size:8.2px;">24,100</span>
<span class="c" style="left:869.55px;width:20px;top:192.2px;text-align:left;font-size:8.2px;">Rp</span>
<span class="c" style="left:864.25px;width:47.6px;top:192.2px;text-align:right;font-size:8.2px;">361,500</span>
<span class="c" style="left:649.5px;width:19.25px;top:203.2px;text-align:center;font-size:8.2px;">4</span>
<svg style="left:651px;top:201px" width="3" height="3"><path d="M0 0H3L0 3Z" fill="#1e6b3c"/></svg>
<span class="c" style="left:670.45px;width:115.75px;top:203.2px;text-align:left;font-size:8.2px;">BS Tematik Kls 3 Tema 4</span>
<span class="c" style="left:784.5px;width:27.25px;top:203.2px;text-align:center;font-size:8.2px;">15</span>
<span class="c" style="left:817.05px;width:20px;top:203.2px;text-align:left;font-size:8.2px;">Rp</span>
<span class="c" style="left:811.75px;width:48.1px;top:203.2px;text-align:right;font-size:8.2px;">19,800</span>
<span class="c" style="left:869.55px;width:20px;top:203.2px;text-align:left;font-size:8.2px;">Rp</span>
<span class="c" style="left:864.25px;width:47.6px;top:203.2px;text-align:right;font-size:8.2px;">297,000</span>
<span class="c" style="left:649.5px;width:19.25px;top:213.2px;text-align:center;font-size:8.2px;">5</span>
<svg style="left:651px;top:212px" width="3" height="3"><path d="M0 0H3L0 3Z" fill="#1e6b3c"/></svg>
<span class="c" style="left:670.45px;width:115.75px;top:213.2px;text-align:left;font-size:8.2px;">BS Tematik Kls 3 Tema 5</span>
<span class="c" style="left:784.5px;width:27.25px;top:213.2px;text-align:center;font-size:8.2px;">15</span>
<span class="c" style="left:817.05px;width:20px;top:213.2px;text-align:left;font-size:8.2px;">Rp</span>
<span class="c" style="left:811.75px;width:48.1px;top:213.2px;text-align:right;font-size:8.2px;">23,100</span>
<span class="c" style="left:869.55px;width:20px;top:213.2px;text-align:left;font-size:8.2px;">Rp</span>
<span class="c" style="left:864.25px;width:47.6px;top:213.2px;text-align:right;font-size:8.2px;">346,500</span>
<span class="c" style="left:649.5px;width:19.25px;top:224.2px;text-align:center;font-size:8.2px;">6</span>
<svg style="left:651px;top:222px" width="3" height="3"><path d="M0 0H3L0 3Z" fill="#1e6b3c"/></svg>
<span class="c" style="left:670.45px;width:115.75px;top:224.2px;text-align:left;font-size:8.2px;">BS Tematik Kls 3 Tema 6</span>
<span class="c" style="left:784.5px;width:27.25px;top:224.2px;text-align:center;font-size:8.2px;">15</span>
<span class="c" style="left:817.05px;width:20px;top:224.2px;text-align:left;font-size:8.2px;">Rp</span>
<span class="c" style="left:811.75px;width:48.1px;top:224.2px;text-align:right;font-size:8.2px;">21,200</span>
<span class="c" style="left:869.55px;width:20px;top:224.2px;text-align:left;font-size:8.2px;">Rp</span>
<span class="c" style="left:864.25px;width:47.6px;top:224.2px;text-align:right;font-size:8.2px;">318,000</span>
<span class="c" style="left:649.5px;width:19.25px;top:234.2px;text-align:center;font-size:8.2px;">7</span>
<svg style="left:651px;top:233px" width="3" height="3"><path d="M0 0H3L0 3Z" fill="#1e6b3c"/></svg>
<span class="c" style="left:670.45px;width:115.75px;top:234.2px;text-align:left;font-size:8.2px;">BS Tematik Kls 3 Tema 7</span>
<span class="c" style="left:784.5px;width:27.25px;top:234.2px;text-align:center;font-size:8.2px;">15</span>
<span class="c" style="left:817.05px;width:20px;top:234.2px;text-align:left;font-size:8.2px;">Rp</span>
<span class="c" style="left:811.75px;width:48.1px;top:234.2px;text-align:right;font-size:8.2px;">22,700</span>
<span class="c" style="left:869.55px;width:20px;top:234.2px;text-align:left;font-size:8.2px;">Rp</span>
<span class="c" style="left:864.25px;width:47.6px;top:234.2px;text-align:right;font-size:8.2px;">340,500</span>
<span class="c" style="left:649.5px;width:19.25px;top:245.2px;text-align:center;font-size:8.2px;">8</span>
<svg style="left:651px;top:243px" width="3" height="3"><path d="M0 0H3L0 3Z" fill="#1e6b3c"/></svg>
<span class="c" style="left:670.45px;width:115.75px;top:245.2px;text-align:left;font-size:8.2px;">BS Tematik Kls 3 Tema 8</span>
<span class="c" style="left:784.5px;width:27.25px;top:245.2px;text-align:center;font-size:8.2px;">15</span>
<span class="c" style="left:817.05px;width:20px;top:245.2px;text-align:left;font-size:8.2px;">Rp</span>
<span class="c" style="left:811.75px;width:48.1px;top:245.2px;text-align:right;font-size:8.2px;">22,700</span>
<span class="c" style="left:869.55px;width:20px;top:245.2px;text-align:left;font-size:8.2px;">Rp</span>
<span class="c" style="left:864.25px;width:47.6px;top:245.2px;text-align:right;font-size:8.2px;">340,500</span>
<div style="left:917.25px;top:243.455px;width:28.75px;height:9.565px;overflow:hidden;"><span class="t" style="left:3.5px;top:0.6px;font:8px 'Liberation Sans', sans-serif;color:#000;">Rp 2,63</span></div>
<span class="c" style="left:649.5px;width:19.25px;top:256.2px;text-align:center;font-size:8.2px;">9</span>
<svg style="left:651px;top:254px" width="3" height="3"><path d="M0 0H3L0 3Z" fill="#1e6b3c"/></svg>
<span class="c" style="left:670.45px;width:115.75px;top:256.2px;text-align:left;font-size:8.2px;">B. Arab MI 3</span>
<span class="c" style="left:784.5px;width:27.25px;top:256.2px;text-align:center;font-size:8.2px;">15</span>
<span class="c" style="left:817.05px;width:20px;top:256.2px;text-align:left;font-size:8.2px;">Rp</span>
<span class="c" style="left:811.75px;width:48.1px;top:256.2px;text-align:right;font-size:8.2px;">47,000</span>
<span class="c" style="left:869.55px;width:20px;top:256.2px;text-align:left;font-size:8.2px;">Rp</span>
<span class="c" style="left:864.25px;width:47.6px;top:256.2px;text-align:right;font-size:8.2px;">705,000</span>
<span class="c" style="left:649.5px;width:19.25px;top:266.2px;text-align:center;font-size:8.2px;">10</span>
<svg style="left:651px;top:265px" width="3" height="3"><path d="M0 0H3L0 3Z" fill="#1e6b3c"/></svg>
<span class="c" style="left:670.45px;width:115.75px;top:266.2px;text-align:left;font-size:8.2px;">Aqidah</span>
<span class="c" style="left:784.5px;width:27.25px;top:266.2px;text-align:center;font-size:8.2px;">1</span>
<span class="c" style="left:817.05px;width:20px;top:266.2px;text-align:left;font-size:8.2px;">Rp</span>
<span class="c" style="left:811.75px;width:48.1px;top:266.2px;text-align:right;font-size:8.2px;">57,000</span>
<span class="c" style="left:869.55px;width:20px;top:266.2px;text-align:left;font-size:8.2px;">Rp</span>
<span class="c" style="left:864.25px;width:47.6px;top:266.2px;text-align:right;font-size:8.2px;">57,000</span>
<span class="c" style="left:649.5px;width:19.25px;top:277.2px;text-align:center;font-size:8.2px;">11</span>
<svg style="left:651px;top:275px" width="3" height="3"><path d="M0 0H3L0 3Z" fill="#1e6b3c"/></svg>
<span class="c" style="left:670.45px;width:115.75px;top:277.2px;text-align:left;font-size:8.2px;">Fiqih</span>
<span class="c" style="left:784.5px;width:27.25px;top:277.2px;text-align:center;font-size:8.2px;">1</span>
<span class="c" style="left:817.05px;width:20px;top:277.2px;text-align:left;font-size:8.2px;">Rp</span>
<span class="c" style="left:811.75px;width:48.1px;top:277.2px;text-align:right;font-size:8.2px;">43,000</span>
<span class="c" style="left:869.55px;width:20px;top:277.2px;text-align:left;font-size:8.2px;">Rp</span>
<span class="c" style="left:864.25px;width:47.6px;top:277.2px;text-align:right;font-size:8.2px;">43,000</span>
<span class="c" style="left:649.5px;width:19.25px;top:287.2px;text-align:center;font-size:8.2px;">12</span>
<svg style="left:651px;top:286px" width="3" height="3"><path d="M0 0H3L0 3Z" fill="#1e6b3c"/></svg>
<span class="c" style="left:670.45px;width:115.75px;top:287.2px;text-align:left;font-size:8.2px;">SKI</span>
<span class="c" style="left:784.5px;width:27.25px;top:287.2px;text-align:center;font-size:8.2px;">1</span>
<span class="c" style="left:817.05px;width:20px;top:287.2px;text-align:left;font-size:8.2px;">Rp</span>
<span class="c" style="left:811.75px;width:48.1px;top:287.2px;text-align:right;font-size:8.2px;">58,000</span>
<span class="c" style="left:869.55px;width:20px;top:287.2px;text-align:left;font-size:8.2px;">Rp</span>
<span class="c" style="left:864.25px;width:47.6px;top:287.2px;text-align:right;font-size:8.2px;">58,000</span>
<div style="left:917.25px;top:285.715px;width:28.75px;height:9.565px;overflow:hidden;"><span class="t" style="left:3.5px;top:0.6px;font:8px 'Liberation Sans', sans-serif;color:#000;">Rp    86</span></div>
<span class="c" style="left:649.5px;width:135px;top:298px;text-align:center;font-size:8.6px;font-weight:bold;">Jumlah</span>
<span class="c" style="left:817.05px;width:20px;top:299.2px;text-align:left;font-size:8.2px;font-weight:bold;">Rp</span>
<span class="c" style="left:811.75px;width:48.1px;top:299.2px;text-align:right;font-size:8.2px;font-weight:bold;">380,600</span>
<span class="c" style="left:871.25px;width:52px;top:299.2px;text-align:left;font-size:8.2px;">##########</span>
<div style="left:16px;top:326px;width:254px;height:151px;background:#fff;"></div>
<div style="left:16px;top:326px;width:254px;height:15px;background:#92d050;"></div>
<div style="left:16px;top:326px;width:254px;height:1px;background:#202020;"></div>
<div style="left:16px;top:340px;width:254px;height:1px;background:#202020;"></div>
<div style="left:16px;top:350px;width:254px;height:1px;background:#202020;"></div>
<div style="left:16px;top:361px;width:254px;height:1px;background:#202020;"></div>
<div style="left:16px;top:371px;width:254px;height:1px;background:#202020;"></div>
<div style="left:16px;top:382px;width:254px;height:1px;background:#202020;"></div>
<div style="left:16px;top:392px;width:254px;height:1px;background:#202020;"></div>
<div style="left:16px;top:403px;width:254px;height:1px;background:#202020;"></div>
<div style="left:16px;top:413px;width:254px;height:1px;background:#202020;"></div>
<div style="left:16px;top:424px;width:254px;height:1px;background:#202020;"></div>
<div style="left:16px;top:434px;width:254px;height:1px;background:#202020;"></div>
<div style="left:16px;top:445px;width:254px;height:1px;background:#202020;"></div>
<div style="left:16px;top:455px;width:254px;height:1px;background:#202020;"></div>
<div style="left:16px;top:466px;width:254px;height:1px;background:#202020;"></div>
<div style="left:16px;top:326px;width:1px;height:150px;background:#202020;"></div>
<div style="left:113px;top:326px;width:1px;height:150px;background:#202020;"></div>
<div style="left:139px;top:326px;width:1px;height:150px;background:#202020;"></div>
<div style="left:205px;top:326px;width:1px;height:150px;background:#202020;"></div>
<div style="left:269px;top:326px;width:1px;height:150px;background:#202020;"></div>
<span class="t" style="left:52.3px;top:316.4px;font:bold 8.6px 'Liberation Serif', serif;letter-spacing:-0.466px;color:#000;">KELAS 4</span>
<span class="t" style="left:43.325px;top:328.98px;font:bold 8.5px 'Liberation Serif', serif;letter-spacing:0.047px;color:#000;">Judul Buku</span>
<span class="t" style="left:118.575px;top:329.43px;font:bold 7.9px 'Liberation Serif', serif;letter-spacing:-0.555px;color:#000;">QTY</span>
<span class="t" style="left:158px;top:328.98px;font:bold 8.5px 'Liberation Serif', serif;letter-spacing:-0.685px;color:#000;">HARGA</span>
<span class="t" style="left:224.275px;top:328.98px;font:bold 8.5px 'Liberation Serif', serif;letter-spacing:-0.796px;color:#000;">TOTAL</span>
<span class="c" style="left:17.7px;width:97.25px;top:342.2px;text-align:left;font-size:8.2px;">BS Tematik Kls 4 Tema 1</span>
<span class="c" style="left:113.25px;width:26.05px;top:342.2px;text-align:center;font-size:8.2px;">7</span>
<span class="c" style="left:144.6px;width:20px;top:342.2px;text-align:left;font-size:8.2px;">Rp</span>
<span class="c" style="left:139.3px;width:61.3px;top:342.2px;text-align:right;font-size:8.2px;">20,300</span>
<span class="c" style="left:210.3px;width:20px;top:342.2px;text-align:left;font-size:8.2px;">Rp</span>
<span class="c" style="left:205px;width:59.35px;top:342.2px;text-align:right;font-size:8.2px;">142,100</span>
<span class="c" style="left:17.7px;width:97.25px;top:353.2px;text-align:left;font-size:8.2px;">BS Tematik Kls 4 Tema 2</span>
<span class="c" style="left:113.25px;width:26.05px;top:353.2px;text-align:center;font-size:8.2px;">7</span>
<span class="c" style="left:144.6px;width:20px;top:353.2px;text-align:left;font-size:8.2px;">Rp</span>
<span class="c" style="left:139.3px;width:61.3px;top:353.2px;text-align:right;font-size:8.2px;">17,000</span>
<span class="c" style="left:210.3px;width:20px;top:353.2px;text-align:left;font-size:8.2px;">Rp</span>
<span class="c" style="left:205px;width:59.35px;top:353.2px;text-align:right;font-size:8.2px;">119,000</span>
<span class="c" style="left:17.7px;width:97.25px;top:363.2px;text-align:left;font-size:8.2px;">BS Tematik Kls 4 Tema 3</span>
<span class="c" style="left:113.25px;width:26.05px;top:363.2px;text-align:center;font-size:8.2px;">7</span>
<span class="c" style="left:144.6px;width:20px;top:363.2px;text-align:left;font-size:8.2px;">Rp</span>
<span class="c" style="left:139.3px;width:61.3px;top:363.2px;text-align:right;font-size:8.2px;">16,100</span>
<span class="c" style="left:210.3px;width:20px;top:363.2px;text-align:left;font-size:8.2px;">Rp</span>
<span class="c" style="left:205px;width:59.35px;top:363.2px;text-align:right;font-size:8.2px;">112,700</span>
<span class="c" style="left:17.7px;width:97.25px;top:374.2px;text-align:left;font-size:8.2px;">BS Tematik Kls 4 Tema 4</span>
<span class="c" style="left:113.25px;width:26.05px;top:374.2px;text-align:center;font-size:8.2px;">7</span>
<span class="c" style="left:144.6px;width:20px;top:374.2px;text-align:left;font-size:8.2px;">Rp</span>
<span class="c" style="left:139.3px;width:61.3px;top:374.2px;text-align:right;font-size:8.2px;">17,000</span>
<span class="c" style="left:210.3px;width:20px;top:374.2px;text-align:left;font-size:8.2px;">Rp</span>
<span class="c" style="left:205px;width:59.35px;top:374.2px;text-align:right;font-size:8.2px;">119,000</span>
<span class="c" style="left:17.7px;width:97.25px;top:384.2px;text-align:left;font-size:8.2px;">BS Tematik Kls 4 Tema 5</span>
<span class="c" style="left:113.25px;width:26.05px;top:384.2px;text-align:center;font-size:8.2px;">7</span>
<span class="c" style="left:144.6px;width:20px;top:384.2px;text-align:left;font-size:8.2px;">Rp</span>
<span class="c" style="left:139.3px;width:61.3px;top:384.2px;text-align:right;font-size:8.2px;">17,000</span>
<span class="c" style="left:210.3px;width:20px;top:384.2px;text-align:left;font-size:8.2px;">Rp</span>
<span class="c" style="left:205px;width:59.35px;top:384.2px;text-align:right;font-size:8.2px;">119,000</span>
<span class="c" style="left:17.7px;width:97.25px;top:395.2px;text-align:left;font-size:8.2px;">BS Tematik Kls 4 Tema 6</span>
<span class="c" style="left:113.25px;width:26.05px;top:395.2px;text-align:center;font-size:8.2px;">7</span>
<span class="c" style="left:144.6px;width:20px;top:395.2px;text-align:left;font-size:8.2px;">Rp</span>
<span class="c" style="left:139.3px;width:61.3px;top:395.2px;text-align:right;font-size:8.2px;">18,800</span>
<span class="c" style="left:210.3px;width:20px;top:395.2px;text-align:left;font-size:8.2px;">Rp</span>
<span class="c" style="left:205px;width:59.35px;top:395.2px;text-align:right;font-size:8.2px;">131,600</span>
<span class="c" style="left:17.7px;width:97.25px;top:405.2px;text-align:left;font-size:8.2px;">BS Tematik Kls 4 Tema 7</span>
<span class="c" style="left:113.25px;width:26.05px;top:405.2px;text-align:center;font-size:8.2px;">7</span>
<span class="c" style="left:144.6px;width:20px;top:405.2px;text-align:left;font-size:8.2px;">Rp</span>
<span class="c" style="left:139.3px;width:61.3px;top:405.2px;text-align:right;font-size:8.2px;">17,500</span>
<span class="c" style="left:210.3px;width:20px;top:405.2px;text-align:left;font-size:8.2px;">Rp</span>
<span class="c" style="left:205px;width:59.35px;top:405.2px;text-align:right;font-size:8.2px;">122,500</span>
<span class="c" style="left:17.7px;width:97.25px;top:416.2px;text-align:left;font-size:8.2px;">BS Tematik Kls 4 Tema 8</span>
<span class="c" style="left:113.25px;width:26.05px;top:416.2px;text-align:center;font-size:8.2px;">7</span>
<span class="c" style="left:144.6px;width:20px;top:416.2px;text-align:left;font-size:8.2px;">Rp</span>
<span class="c" style="left:139.3px;width:61.3px;top:416.2px;text-align:right;font-size:8.2px;">20,300</span>
<span class="c" style="left:210.3px;width:20px;top:416.2px;text-align:left;font-size:8.2px;">Rp</span>
<span class="c" style="left:205px;width:59.35px;top:416.2px;text-align:right;font-size:8.2px;">142,100</span>
<span class="c" style="left:17.7px;width:97.25px;top:426.2px;text-align:left;font-size:8.2px;">BS Tematik Kls 4 Tema 9</span>
<span class="c" style="left:113.25px;width:26.05px;top:426.2px;text-align:center;font-size:8.2px;">7</span>
<span class="c" style="left:144.6px;width:20px;top:426.2px;text-align:left;font-size:8.2px;">Rp</span>
<span class="c" style="left:139.3px;width:61.3px;top:426.2px;text-align:right;font-size:8.2px;">18,400</span>
<span class="c" style="left:210.3px;width:20px;top:426.2px;text-align:left;font-size:8.2px;">Rp</span>
<span class="c" style="left:205px;width:59.35px;top:426.2px;text-align:right;font-size:8.2px;">128,800</span>
<span class="c" style="left:274.05px;width:20px;top:426.2px;text-align:left;font-size:8.2px;">Rp</span>
<span class="c" style="left:268.75px;width:55.6px;top:426.2px;text-align:right;font-size:8.2px;">1,136,800</span>
<span class="c" style="left:17.7px;width:97.25px;top:437.2px;text-align:left;font-size:8.2px;">B. Arab MI 4</span>
<span class="c" style="left:113.25px;width:26.05px;top:437.2px;text-align:center;font-size:8.2px;">7</span>
<span class="c" style="left:144.6px;width:20px;top:437.2px;text-align:left;font-size:8.2px;">Rp</span>
<span class="c" style="left:139.3px;width:61.3px;top:437.2px;text-align:right;font-size:8.2px;">47,000</span>
<span class="c" style="left:210.3px;width:20px;top:437.2px;text-align:left;font-size:8.2px;">Rp</span>
<span class="c" style="left:205px;width:59.35px;top:437.2px;text-align:right;font-size:8.2px;">329,000</span>
<span class="c" style="left:17.7px;width:97.25px;top:447.2px;text-align:left;font-size:8.2px;">Aqidah</span>
<span class="c" style="left:113.25px;width:26.05px;top:447.2px;text-align:center;font-size:8.2px;">1</span>
<span class="c" style="left:144.6px;width:20px;top:447.2px;text-align:left;font-size:8.2px;">Rp</span>
<span class="c" style="left:139.3px;width:61.3px;top:447.2px;text-align:right;font-size:8.2px;">58,000</span>
<span class="c" style="left:210.3px;width:20px;top:447.2px;text-align:left;font-size:8.2px;">Rp</span>
<span class="c" style="left:205px;width:59.35px;top:447.2px;text-align:right;font-size:8.2px;">58,000</span>
<span class="c" style="left:17.7px;width:97.25px;top:458.2px;text-align:left;font-size:8.2px;">Fiqih</span>
<span class="c" style="left:113.25px;width:26.05px;top:458.2px;text-align:center;font-size:8.2px;">1</span>
<span class="c" style="left:144.6px;width:20px;top:458.2px;text-align:left;font-size:8.2px;">Rp</span>
<span class="c" style="left:139.3px;width:61.3px;top:458.2px;text-align:right;font-size:8.2px;">57,000</span>
<span class="c" style="left:210.3px;width:20px;top:458.2px;text-align:left;font-size:8.2px;">Rp</span>
<span class="c" style="left:205px;width:59.35px;top:458.2px;text-align:right;font-size:8.2px;">57,000</span>
<span class="c" style="left:17.7px;width:97.25px;top:468.2px;text-align:left;font-size:8.2px;">SKI</span>
<span class="c" style="left:113.25px;width:26.05px;top:468.2px;text-align:center;font-size:8.2px;">1</span>
<span class="c" style="left:144.6px;width:20px;top:468.2px;text-align:left;font-size:8.2px;">Rp</span>
<span class="c" style="left:139.3px;width:61.3px;top:468.2px;text-align:right;font-size:8.2px;">47,000</span>
<span class="c" style="left:210.3px;width:20px;top:468.2px;text-align:left;font-size:8.2px;">Rp</span>
<span class="c" style="left:205px;width:59.35px;top:468.2px;text-align:right;font-size:8.2px;">47,000</span>
<span class="c" style="left:274.05px;width:20px;top:468.2px;text-align:left;font-size:8.2px;">Rp</span>
<span class="c" style="left:268.75px;width:55.6px;top:468.2px;text-align:right;font-size:8.2px;">491,000</span>
<div style="left:329px;top:326px;width:259px;height:151px;background:#fff;"></div>
<div style="left:329px;top:326px;width:259px;height:15px;background:#92d050;"></div>
<div style="left:329px;top:326px;width:259px;height:1px;background:#202020;"></div>
<div style="left:329px;top:340px;width:259px;height:1px;background:#202020;"></div>
<div style="left:329px;top:350px;width:259px;height:1px;background:#202020;"></div>
<div style="left:329px;top:361px;width:259px;height:1px;background:#202020;"></div>
<div style="left:329px;top:371px;width:259px;height:1px;background:#202020;"></div>
<div style="left:329px;top:382px;width:259px;height:1px;background:#202020;"></div>
<div style="left:329px;top:392px;width:259px;height:1px;background:#202020;"></div>
<div style="left:329px;top:403px;width:259px;height:1px;background:#202020;"></div>
<div style="left:329px;top:413px;width:259px;height:1px;background:#202020;"></div>
<div style="left:329px;top:424px;width:259px;height:1px;background:#202020;"></div>
<div style="left:329px;top:434px;width:259px;height:1px;background:#202020;"></div>
<div style="left:329px;top:445px;width:259px;height:1px;background:#202020;"></div>
<div style="left:329px;top:455px;width:259px;height:1px;background:#202020;"></div>
<div style="left:329px;top:466px;width:259px;height:1px;background:#202020;"></div>
<div style="left:329px;top:326px;width:1px;height:150px;background:#202020;"></div>
<div style="left:348px;top:326px;width:1px;height:150px;background:#202020;"></div>
<div style="left:448px;top:326px;width:1px;height:150px;background:#202020;"></div>
<div style="left:474px;top:326px;width:1px;height:150px;background:#202020;"></div>
<div style="left:522px;top:326px;width:1px;height:150px;background:#202020;"></div>
<div style="left:587px;top:326px;width:1px;height:150px;background:#202020;"></div>
<span class="t" style="left:385.5px;top:316.4px;font:bold 8.6px 'Liberation Serif', serif;letter-spacing:-0.466px;color:#000;">KELAS 5</span>
<span class="t" style="left:332.925px;top:328.98px;font:bold 8.5px 'Liberation Serif', serif;letter-spacing:-0.383px;color:#000;">No.</span>
<span class="t" style="left:376.825px;top:328.98px;font:bold 8.5px 'Liberation Serif', serif;letter-spacing:0.047px;color:#000;">Judul Buku</span>
<span class="t" style="left:453.55px;top:329.43px;font:bold 7.9px 'Liberation Serif', serif;letter-spacing:-0.555px;color:#000;">QTY</span>
<span class="t" style="left:483.9px;top:328.98px;font:bold 8.5px 'Liberation Serif', serif;letter-spacing:-0.685px;color:#000;">HARGA</span>
<span class="t" style="left:541.575px;top:328.98px;font:bold 8.5px 'Liberation Serif', serif;letter-spacing:-0.796px;color:#000;">TOTAL</span>
<span class="c" style="left:328.75px;width:19.5px;top:342.2px;text-align:center;font-size:8.2px;">1</span>
<svg style="left:330px;top:341px" width="3" height="3"><path d="M0 0H3L0 3Z" fill="#1e6b3c"/></svg>
<span class="c" style="left:349.95px;width:99.75px;top:342.2px;text-align:left;font-size:8.2px;">BS Tematik Kls 5 Tema 1</span>
<span class="c" style="left:448px;width:26.5px;top:342.2px;text-align:center;font-size:8.2px;">14</span>
<span class="c" style="left:479.8px;width:20px;top:342.2px;text-align:left;font-size:8.2px;">Rp</span>
<span class="c" style="left:474.5px;width:42.7px;top:342.2px;text-align:right;font-size:8.2px;">21,200</span>
<span class="c" style="left:526.9px;width:20px;top:342.2px;text-align:left;font-size:8.2px;">Rp</span>
<span class="c" style="left:521.6px;width:60.75px;top:342.2px;text-align:right;font-size:8.2px;">296,800</span>
<span class="c" style="left:328.75px;width:19.5px;top:353.2px;text-align:center;font-size:8.2px;">2</span>
<svg style="left:330px;top:351px" width="3" height="3"><path d="M0 0H3L0 3Z" fill="#1e6b3c"/></svg>
<span class="c" style="left:349.95px;width:99.75px;top:353.2px;text-align:left;font-size:8.2px;">BS Tematik Kls 5 Tema 2</span>
<span class="c" style="left:448px;width:26.5px;top:353.2px;text-align:center;font-size:8.2px;">14</span>
<span class="c" style="left:479.8px;width:20px;top:353.2px;text-align:left;font-size:8.2px;">Rp</span>
<span class="c" style="left:474.5px;width:42.7px;top:353.2px;text-align:right;font-size:8.2px;">15,700</span>
<span class="c" style="left:526.9px;width:20px;top:353.2px;text-align:left;font-size:8.2px;">Rp</span>
<span class="c" style="left:521.6px;width:60.75px;top:353.2px;text-align:right;font-size:8.2px;">219,800</span>
<span class="c" style="left:328.75px;width:19.5px;top:363.2px;text-align:center;font-size:8.2px;">3</span>
<svg style="left:330px;top:362px" width="3" height="3"><path d="M0 0H3L0 3Z" fill="#1e6b3c"/></svg>
<span class="c" style="left:349.95px;width:99.75px;top:363.2px;text-align:left;font-size:8.2px;">BS Tematik Kls 5 Tema 3</span>
<span class="c" style="left:448px;width:26.5px;top:363.2px;text-align:center;font-size:8.2px;">14</span>
<span class="c" style="left:479.8px;width:20px;top:363.2px;text-align:left;font-size:8.2px;">Rp</span>
<span class="c" style="left:474.5px;width:42.7px;top:363.2px;text-align:right;font-size:8.2px;">14,700</span>
<span class="c" style="left:526.9px;width:20px;top:363.2px;text-align:left;font-size:8.2px;">Rp</span>
<span class="c" style="left:521.6px;width:60.75px;top:363.2px;text-align:right;font-size:8.2px;">205,800</span>
<span class="c" style="left:328.75px;width:19.5px;top:374.2px;text-align:center;font-size:8.2px;">4</span>
<svg style="left:330px;top:372px" width="3" height="3"><path d="M0 0H3L0 3Z" fill="#1e6b3c"/></svg>
<span class="c" style="left:349.95px;width:99.75px;top:374.2px;text-align:left;font-size:8.2px;">BS Tematik Kls 5 Tema 4</span>
<span class="c" style="left:448px;width:26.5px;top:374.2px;text-align:center;font-size:8.2px;">14</span>
<span class="c" style="left:479.8px;width:20px;top:374.2px;text-align:left;font-size:8.2px;">Rp</span>
<span class="c" style="left:474.5px;width:42.7px;top:374.2px;text-align:right;font-size:8.2px;">17,000</span>
<span class="c" style="left:526.9px;width:20px;top:374.2px;text-align:left;font-size:8.2px;">Rp</span>
<span class="c" style="left:521.6px;width:60.75px;top:374.2px;text-align:right;font-size:8.2px;">238,000</span>
<span class="c" style="left:328.75px;width:19.5px;top:384.2px;text-align:center;font-size:8.2px;">5</span>
<svg style="left:330px;top:383px" width="3" height="3"><path d="M0 0H3L0 3Z" fill="#1e6b3c"/></svg>
<span class="c" style="left:349.95px;width:99.75px;top:384.2px;text-align:left;font-size:8.2px;">BS Tematik Kls 5 Tema 5</span>
<span class="c" style="left:448px;width:26.5px;top:384.2px;text-align:center;font-size:8.2px;">14</span>
<span class="c" style="left:479.8px;width:20px;top:384.2px;text-align:left;font-size:8.2px;">Rp</span>
<span class="c" style="left:474.5px;width:42.7px;top:384.2px;text-align:right;font-size:8.2px;">18,800</span>
<span class="c" style="left:526.9px;width:20px;top:384.2px;text-align:left;font-size:8.2px;">Rp</span>
<span class="c" style="left:521.6px;width:60.75px;top:384.2px;text-align:right;font-size:8.2px;">263,200</span>
<span class="c" style="left:328.75px;width:19.5px;top:395.2px;text-align:center;font-size:8.2px;">6</span>
<svg style="left:330px;top:393px" width="3" height="3"><path d="M0 0H3L0 3Z" fill="#1e6b3c"/></svg>
<span class="c" style="left:349.95px;width:99.75px;top:395.2px;text-align:left;font-size:8.2px;">BS Tematik Kls 5 Tema 6</span>
<span class="c" style="left:448px;width:26.5px;top:395.2px;text-align:center;font-size:8.2px;">14</span>
<span class="c" style="left:479.8px;width:20px;top:395.2px;text-align:left;font-size:8.2px;">Rp</span>
<span class="c" style="left:474.5px;width:42.7px;top:395.2px;text-align:right;font-size:8.2px;">22,700</span>
<span class="c" style="left:526.9px;width:20px;top:395.2px;text-align:left;font-size:8.2px;">Rp</span>
<span class="c" style="left:521.6px;width:60.75px;top:395.2px;text-align:right;font-size:8.2px;">317,800</span>
<span class="c" style="left:328.75px;width:19.5px;top:405.2px;text-align:center;font-size:8.2px;">7</span>
<svg style="left:330px;top:404px" width="3" height="3"><path d="M0 0H3L0 3Z" fill="#1e6b3c"/></svg>
<span class="c" style="left:349.95px;width:99.75px;top:405.2px;text-align:left;font-size:8.2px;">BS Tematik Kls 5 Tema 7</span>
<span class="c" style="left:448px;width:26.5px;top:405.2px;text-align:center;font-size:8.2px;">14</span>
<span class="c" style="left:479.8px;width:20px;top:405.2px;text-align:left;font-size:8.2px;">Rp</span>
<span class="c" style="left:474.5px;width:42.7px;top:405.2px;text-align:right;font-size:8.2px;">22,700</span>
<span class="c" style="left:526.9px;width:20px;top:405.2px;text-align:left;font-size:8.2px;">Rp</span>
<span class="c" style="left:521.6px;width:60.75px;top:405.2px;text-align:right;font-size:8.2px;">317,800</span>
<span class="c" style="left:328.75px;width:19.5px;top:416.2px;text-align:center;font-size:8.2px;">8</span>
<svg style="left:330px;top:414px" width="3" height="3"><path d="M0 0H3L0 3Z" fill="#1e6b3c"/></svg>
<span class="c" style="left:349.95px;width:99.75px;top:416.2px;text-align:left;font-size:8.2px;">BS Tematik Kls 5 Tema 8</span>
<span class="c" style="left:448px;width:26.5px;top:416.2px;text-align:center;font-size:8.2px;">14</span>
<span class="c" style="left:479.8px;width:20px;top:416.2px;text-align:left;font-size:8.2px;">Rp</span>
<span class="c" style="left:474.5px;width:42.7px;top:416.2px;text-align:right;font-size:8.2px;">17,500</span>
<span class="c" style="left:526.9px;width:20px;top:416.2px;text-align:left;font-size:8.2px;">Rp</span>
<span class="c" style="left:521.6px;width:60.75px;top:416.2px;text-align:right;font-size:8.2px;">245,000</span>
<span class="c" style="left:328.75px;width:19.5px;top:426.2px;text-align:center;font-size:8.2px;">9</span>
<svg style="left:330px;top:425px" width="3" height="3"><path d="M0 0H3L0 3Z" fill="#1e6b3c"/></svg>
<span class="c" style="left:349.95px;width:99.75px;top:426.2px;text-align:left;font-size:8.2px;">BS Tematik Kls 5 Tema 9</span>
<span class="c" style="left:448px;width:26.5px;top:426.2px;text-align:center;font-size:8.2px;">14</span>
<span class="c" style="left:479.8px;width:20px;top:426.2px;text-align:left;font-size:8.2px;">Rp</span>
<span class="c" style="left:474.5px;width:42.7px;top:426.2px;text-align:right;font-size:8.2px;">21,700</span>
<span class="c" style="left:526.9px;width:20px;top:426.2px;text-align:left;font-size:8.2px;">Rp</span>
<span class="c" style="left:521.6px;width:60.75px;top:426.2px;text-align:right;font-size:8.2px;">303,800</span>
<span class="c" style="left:592.05px;width:20px;top:426.2px;text-align:left;font-size:8.2px;">Rp</span>
<span class="c" style="left:586.75px;width:58.35px;top:426.2px;text-align:right;font-size:8.2px;">2,408,000</span>
<span class="c" style="left:328.75px;width:19.5px;top:437.2px;text-align:center;font-size:8.2px;">10</span>
<svg style="left:330px;top:435px" width="3" height="3"><path d="M0 0H3L0 3Z" fill="#1e6b3c"/></svg>
<span class="c" style="left:349.95px;width:99.75px;top:437.2px;text-align:left;font-size:8.2px;">B. Arab MI 5</span>
<span class="c" style="left:448px;width:26.5px;top:437.2px;text-align:center;font-size:8.2px;">14</span>
<span class="c" style="left:479.8px;width:20px;top:437.2px;text-align:left;font-size:8.2px;">Rp</span>
<span class="c" style="left:474.5px;width:42.7px;top:437.2px;text-align:right;font-size:8.2px;">47,000</span>
<span class="c" style="left:526.9px;width:20px;top:437.2px;text-align:left;font-size:8.2px;">Rp</span>
<span class="c" style="left:521.6px;width:60.75px;top:437.2px;text-align:right;font-size:8.2px;">658,000</span>
<span class="c" style="left:328.75px;width:19.5px;top:447.2px;text-align:center;font-size:8.2px;">11</span>
<svg style="left:330px;top:446px" width="3" height="3"><path d="M0 0H3L0 3Z" fill="#1e6b3c"/></svg>
<span class="c" style="left:349.95px;width:99.75px;top:447.2px;text-align:left;font-size:8.2px;">Aqidah</span>
<span class="c" style="left:448px;width:26.5px;top:447.2px;text-align:center;font-size:8.2px;">1</span>
<span class="c" style="left:479.8px;width:20px;top:447.2px;text-align:left;font-size:8.2px;">Rp</span>
<span class="c" style="left:474.5px;width:42.7px;top:447.2px;text-align:right;font-size:8.2px;">54,000</span>
<span class="c" style="left:526.9px;width:20px;top:447.2px;text-align:left;font-size:8.2px;">Rp</span>
<span class="c" style="left:521.6px;width:60.75px;top:447.2px;text-align:right;font-size:8.2px;">54,000</span>
<span class="c" style="left:328.75px;width:19.5px;top:458.2px;text-align:center;font-size:8.2px;">12</span>
<svg style="left:330px;top:456px" width="3" height="3"><path d="M0 0H3L0 3Z" fill="#1e6b3c"/></svg>
<span class="c" style="left:349.95px;width:99.75px;top:458.2px;text-align:left;font-size:8.2px;">Fiqih</span>
<span class="c" style="left:448px;width:26.5px;top:458.2px;text-align:center;font-size:8.2px;">1</span>
<span class="c" style="left:479.8px;width:20px;top:458.2px;text-align:left;font-size:8.2px;">Rp</span>
<span class="c" style="left:474.5px;width:42.7px;top:458.2px;text-align:right;font-size:8.2px;">54,000</span>
<span class="c" style="left:526.9px;width:20px;top:458.2px;text-align:left;font-size:8.2px;">Rp</span>
<span class="c" style="left:521.6px;width:60.75px;top:458.2px;text-align:right;font-size:8.2px;">54,000</span>
<span class="c" style="left:328.75px;width:19.5px;top:468.2px;text-align:center;font-size:8.2px;">13</span>
<svg style="left:330px;top:467px" width="3" height="3"><path d="M0 0H3L0 3Z" fill="#1e6b3c"/></svg>
<span class="c" style="left:349.95px;width:99.75px;top:468.2px;text-align:left;font-size:8.2px;">SKI</span>
<span class="c" style="left:448px;width:26.5px;top:468.2px;text-align:center;font-size:8.2px;">1</span>
<span class="c" style="left:479.8px;width:20px;top:468.2px;text-align:left;font-size:8.2px;">Rp</span>
<span class="c" style="left:474.5px;width:42.7px;top:468.2px;text-align:right;font-size:8.2px;">54,000</span>
<span class="c" style="left:526.9px;width:20px;top:468.2px;text-align:left;font-size:8.2px;">Rp</span>
<span class="c" style="left:521.6px;width:60.75px;top:468.2px;text-align:right;font-size:8.2px;">54,000</span>
<span class="c" style="left:592.05px;width:20px;top:468.2px;text-align:left;font-size:8.2px;">Rp</span>
<span class="c" style="left:586.75px;width:58.35px;top:468.2px;text-align:right;font-size:8.2px;">820,000</span>
<div style="left:650px;top:326px;width:267px;height:151px;background:#fff;"></div>
<div style="left:650px;top:326px;width:267px;height:15px;background:#92d050;"></div>
<div style="left:650px;top:326px;width:267px;height:1px;background:#202020;"></div>
<div style="left:650px;top:340px;width:267px;height:1px;background:#202020;"></div>
<div style="left:650px;top:350px;width:267px;height:1px;background:#202020;"></div>
<div style="left:650px;top:361px;width:267px;height:1px;background:#202020;"></div>
<div style="left:650px;top:371px;width:267px;height:1px;background:#202020;"></div>
<div style="left:650px;top:382px;width:267px;height:1px;background:#202020;"></div>
<div style="left:650px;top:392px;width:267px;height:1px;background:#202020;"></div>
<div style="left:650px;top:403px;width:267px;height:1px;background:#202020;"></div>
<div style="left:650px;top:413px;width:267px;height:1px;background:#202020;"></div>
<div style="left:650px;top:424px;width:267px;height:1px;background:#202020;"></div>
<div style="left:650px;top:434px;width:267px;height:1px;background:#202020;"></div>
<div style="left:650px;top:445px;width:267px;height:1px;background:#202020;"></div>
<div style="left:650px;top:455px;width:267px;height:1px;background:#202020;"></div>
<div style="left:650px;top:466px;width:267px;height:1px;background:#202020;"></div>
<div style="left:650px;top:326px;width:1px;height:150px;background:#202020;"></div>
<div style="left:669px;top:326px;width:1px;height:150px;background:#202020;"></div>
<div style="left:784px;top:326px;width:1px;height:150px;background:#202020;"></div>
<div style="left:812px;top:326px;width:1px;height:150px;background:#202020;"></div>
<div style="left:864px;top:326px;width:1px;height:150px;background:#202020;"></div>
<div style="left:916px;top:326px;width:1px;height:150px;background:#202020;"></div>
<span class="t" style="left:713.25px;top:316.4px;font:bold 8.6px 'Liberation Serif', serif;letter-spacing:-0.432px;color:#000;">KELAS 6</span>
<span class="t" style="left:653.55px;top:328.98px;font:bold 8.5px 'Liberation Serif', serif;letter-spacing:-0.383px;color:#000;">No.</span>
<span class="t" style="left:705.325px;top:328.98px;font:bold 8.5px 'Liberation Serif', serif;letter-spacing:0.047px;color:#000;">Judul Buku</span>
<span class="t" style="left:790.425px;top:329.43px;font:bold 7.9px 'Liberation Serif', serif;letter-spacing:-0.555px;color:#000;">QTY</span>
<span class="t" style="left:823.85px;top:328.98px;font:bold 8.5px 'Liberation Serif', serif;letter-spacing:-0.685px;color:#000;">HARGA</span>
<span class="t" style="left:877.65px;top:328.98px;font:bold 8.5px 'Liberation Serif', serif;letter-spacing:-0.796px;color:#000;">TOTAL</span>
<span class="c" style="left:649.5px;width:19.25px;top:342.2px;text-align:center;font-size:8.2px;">1</span>
<svg style="left:651px;top:341px" width="3" height="3"><path d="M0 0H3L0 3Z" fill="#1e6b3c"/></svg>
<span class="c" style="left:670.45px;width:115.75px;top:342.2px;text-align:left;font-size:8.2px;">BS Tematik Kls 6 Tema 1</span>
<span class="c" style="left:784.5px;width:27.25px;top:342.2px;text-align:center;font-size:8.2px;">15</span>
<span class="c" style="left:817.05px;width:20px;top:342.2px;text-align:left;font-size:8.2px;">Rp</span>
<span class="c" style="left:811.75px;width:48.1px;top:342.2px;text-align:right;font-size:8.2px;">18,400</span>
<span class="c" style="left:869.55px;width:20px;top:342.2px;text-align:left;font-size:8.2px;">Rp</span>
<span class="c" style="left:864.25px;width:47.6px;top:342.2px;text-align:right;font-size:8.2px;">276,000</span>
<span class="c" style="left:649.5px;width:19.25px;top:353.2px;text-align:center;font-size:8.2px;">2</span>
<svg style="left:651px;top:351px" width="3" height="3"><path d="M0 0H3L0 3Z" fill="#1e6b3c"/></svg>
<span class="c" style="left:670.45px;width:115.75px;top:353.2px;text-align:left;font-size:8.2px;">BS Tematik Kls 6 Tema 2</span>
<span class="c" style="left:784.5px;width:27.25px;top:353.2px;text-align:center;font-size:8.2px;">15</span>
<span class="c" style="left:817.05px;width:20px;top:353.2px;text-align:left;font-size:8.2px;">Rp</span>
<span class="c" style="left:811.75px;width:48.1px;top:353.2px;text-align:right;font-size:8.2px;">17,000</span>
<span class="c" style="left:869.55px;width:20px;top:353.2px;text-align:left;font-size:8.2px;">Rp</span>
<span class="c" style="left:864.25px;width:47.6px;top:353.2px;text-align:right;font-size:8.2px;">255,000</span>
<span class="c" style="left:649.5px;width:19.25px;top:363.2px;text-align:center;font-size:8.2px;">3</span>
<svg style="left:651px;top:362px" width="3" height="3"><path d="M0 0H3L0 3Z" fill="#1e6b3c"/></svg>
<span class="c" style="left:670.45px;width:115.75px;top:363.2px;text-align:left;font-size:8.2px;">BS Tematik Kls 6 Tema 3</span>
<span class="c" style="left:784.5px;width:27.25px;top:363.2px;text-align:center;font-size:8.2px;">15</span>
<span class="c" style="left:817.05px;width:20px;top:363.2px;text-align:left;font-size:8.2px;">Rp</span>
<span class="c" style="left:811.75px;width:48.1px;top:363.2px;text-align:right;font-size:8.2px;">21,200</span>
<span class="c" style="left:869.55px;width:20px;top:363.2px;text-align:left;font-size:8.2px;">Rp</span>
<span class="c" style="left:864.25px;width:47.6px;top:363.2px;text-align:right;font-size:8.2px;">318,000</span>
<span class="c" style="left:649.5px;width:19.25px;top:374.2px;text-align:center;font-size:8.2px;">4</span>
<svg style="left:651px;top:372px" width="3" height="3"><path d="M0 0H3L0 3Z" fill="#1e6b3c"/></svg>
<span class="c" style="left:670.45px;width:115.75px;top:374.2px;text-align:left;font-size:8.2px;">BS Tematik Kls 6 Tema 4</span>
<span class="c" style="left:784.5px;width:27.25px;top:374.2px;text-align:center;font-size:8.2px;">15</span>
<span class="c" style="left:817.05px;width:20px;top:374.2px;text-align:left;font-size:8.2px;">Rp</span>
<span class="c" style="left:811.75px;width:48.1px;top:374.2px;text-align:right;font-size:8.2px;">16,100</span>
<span class="c" style="left:869.55px;width:20px;top:374.2px;text-align:left;font-size:8.2px;">Rp</span>
<span class="c" style="left:864.25px;width:47.6px;top:374.2px;text-align:right;font-size:8.2px;">241,500</span>
<span class="c" style="left:649.5px;width:19.25px;top:384.2px;text-align:center;font-size:8.2px;">5</span>
<svg style="left:651px;top:383px" width="3" height="3"><path d="M0 0H3L0 3Z" fill="#1e6b3c"/></svg>
<span class="c" style="left:670.45px;width:115.75px;top:384.2px;text-align:left;font-size:8.2px;">BS Tematik Kls 6 Tema 5</span>
<span class="c" style="left:784.5px;width:27.25px;top:384.2px;text-align:center;font-size:8.2px;">15</span>
<span class="c" style="left:817.05px;width:20px;top:384.2px;text-align:left;font-size:8.2px;">Rp</span>
<span class="c" style="left:811.75px;width:48.1px;top:384.2px;text-align:right;font-size:8.2px;">17,000</span>
<span class="c" style="left:869.55px;width:20px;top:384.2px;text-align:left;font-size:8.2px;">Rp</span>
<span class="c" style="left:864.25px;width:47.6px;top:384.2px;text-align:right;font-size:8.2px;">255,000</span>
<span class="c" style="left:649.5px;width:19.25px;top:395.2px;text-align:center;font-size:8.2px;">6</span>
<svg style="left:651px;top:393px" width="3" height="3"><path d="M0 0H3L0 3Z" fill="#1e6b3c"/></svg>
<span class="c" style="left:670.45px;width:115.75px;top:395.2px;text-align:left;font-size:8.2px;">BS Tematik Kls 6 Tema 6</span>
<span class="c" style="left:784.5px;width:27.25px;top:395.2px;text-align:center;font-size:8.2px;">15</span>
<span class="c" style="left:817.05px;width:20px;top:395.2px;text-align:left;font-size:8.2px;">Rp</span>
<span class="c" style="left:811.75px;width:48.1px;top:395.2px;text-align:right;font-size:8.2px;">16,100</span>
<span class="c" style="left:869.55px;width:20px;top:395.2px;text-align:left;font-size:8.2px;">Rp</span>
<span class="c" style="left:864.25px;width:47.6px;top:395.2px;text-align:right;font-size:8.2px;">241,500</span>
<span class="c" style="left:649.5px;width:19.25px;top:405.2px;text-align:center;font-size:8.2px;">7</span>
<svg style="left:651px;top:404px" width="3" height="3"><path d="M0 0H3L0 3Z" fill="#1e6b3c"/></svg>
<span class="c" style="left:670.45px;width:115.75px;top:405.2px;text-align:left;font-size:8.2px;">BS Tematik Kls 6 Tema 7</span>
<span class="c" style="left:784.5px;width:27.25px;top:405.2px;text-align:center;font-size:8.2px;">15</span>
<span class="c" style="left:817.05px;width:20px;top:405.2px;text-align:left;font-size:8.2px;">Rp</span>
<span class="c" style="left:811.75px;width:48.1px;top:405.2px;text-align:right;font-size:8.2px;">17,000</span>
<span class="c" style="left:869.55px;width:20px;top:405.2px;text-align:left;font-size:8.2px;">Rp</span>
<span class="c" style="left:864.25px;width:47.6px;top:405.2px;text-align:right;font-size:8.2px;">255,000</span>
<span class="c" style="left:649.5px;width:19.25px;top:416.2px;text-align:center;font-size:8.2px;">8</span>
<svg style="left:651px;top:414px" width="3" height="3"><path d="M0 0H3L0 3Z" fill="#1e6b3c"/></svg>
<span class="c" style="left:670.45px;width:115.75px;top:416.2px;text-align:left;font-size:8.2px;">BS Tematik Kls 6 Tema 8</span>
<span class="c" style="left:784.5px;width:27.25px;top:416.2px;text-align:center;font-size:8.2px;">15</span>
<span class="c" style="left:817.05px;width:20px;top:416.2px;text-align:left;font-size:8.2px;">Rp</span>
<span class="c" style="left:811.75px;width:48.1px;top:416.2px;text-align:right;font-size:8.2px;">16,100</span>
<span class="c" style="left:869.55px;width:20px;top:416.2px;text-align:left;font-size:8.2px;">Rp</span>
<span class="c" style="left:864.25px;width:47.6px;top:416.2px;text-align:right;font-size:8.2px;">241,500</span>
<span class="c" style="left:649.5px;width:19.25px;top:426.2px;text-align:center;font-size:8.2px;">9</span>
<svg style="left:651px;top:425px" width="3" height="3"><path d="M0 0H3L0 3Z" fill="#1e6b3c"/></svg>
<span class="c" style="left:670.45px;width:115.75px;top:426.2px;text-align:left;font-size:8.2px;">BS Tematik Kls 6 Tema 9</span>
<span class="c" style="left:784.5px;width:27.25px;top:426.2px;text-align:center;font-size:8.2px;">15</span>
<span class="c" style="left:817.05px;width:20px;top:426.2px;text-align:left;font-size:8.2px;">Rp</span>
<span class="c" style="left:811.75px;width:48.1px;top:426.2px;text-align:right;font-size:8.2px;">24,100</span>
<span class="c" style="left:869.55px;width:20px;top:426.2px;text-align:left;font-size:8.2px;">Rp</span>
<span class="c" style="left:864.25px;width:47.6px;top:426.2px;text-align:right;font-size:8.2px;">361,500</span>
<div style="left:917.25px;top:424.78px;width:28.75px;height:9.565px;overflow:hidden;"><span class="t" style="left:3.5px;top:0.6px;font:8px 'Liberation Sans', sans-serif;color:#000;">Rp 2,44</span></div>
<span class="c" style="left:649.5px;width:19.25px;top:437.2px;text-align:center;font-size:8.2px;">10</span>
<svg style="left:651px;top:435px" width="3" height="3"><path d="M0 0H3L0 3Z" fill="#1e6b3c"/></svg>
<span class="c" style="left:670.45px;width:115.75px;top:437.2px;text-align:left;font-size:8.2px;">B. Arab MI 6</span>
<span class="c" style="left:784.5px;width:27.25px;top:437.2px;text-align:center;font-size:8.2px;">15</span>
<span class="c" style="left:817.05px;width:20px;top:437.2px;text-align:left;font-size:8.2px;">Rp</span>
<span class="c" style="left:811.75px;width:48.1px;top:437.2px;text-align:right;font-size:8.2px;">46,000</span>
<span class="c" style="left:869.55px;width:20px;top:437.2px;text-align:left;font-size:8.2px;">Rp</span>
<span class="c" style="left:864.25px;width:47.6px;top:437.2px;text-align:right;font-size:8.2px;">690,000</span>
<span class="c" style="left:649.5px;width:19.25px;top:447.2px;text-align:center;font-size:8.2px;">11</span>
<svg style="left:651px;top:446px" width="3" height="3"><path d="M0 0H3L0 3Z" fill="#1e6b3c"/></svg>
<span class="c" style="left:670.45px;width:115.75px;top:447.2px;text-align:left;font-size:8.2px;">Aqidah</span>
<span class="c" style="left:784.5px;width:27.25px;top:447.2px;text-align:center;font-size:8.2px;">1</span>
<span class="c" style="left:817.05px;width:20px;top:447.2px;text-align:left;font-size:8.2px;">Rp</span>
<span class="c" style="left:811.75px;width:48.1px;top:447.2px;text-align:right;font-size:8.2px;">54,000</span>
<span class="c" style="left:869.55px;width:20px;top:447.2px;text-align:left;font-size:8.2px;">Rp</span>
<span class="c" style="left:864.25px;width:47.6px;top:447.2px;text-align:right;font-size:8.2px;">54,000</span>
<span class="c" style="left:649.5px;width:19.25px;top:458.2px;text-align:center;font-size:8.2px;">12</span>
<svg style="left:651px;top:456px" width="3" height="3"><path d="M0 0H3L0 3Z" fill="#1e6b3c"/></svg>
<span class="c" style="left:670.45px;width:115.75px;top:458.2px;text-align:left;font-size:8.2px;">Fiqih</span>
<span class="c" style="left:784.5px;width:27.25px;top:458.2px;text-align:center;font-size:8.2px;">1</span>
<span class="c" style="left:817.05px;width:20px;top:458.2px;text-align:left;font-size:8.2px;">Rp</span>
<span class="c" style="left:811.75px;width:48.1px;top:458.2px;text-align:right;font-size:8.2px;">54,000</span>
<span class="c" style="left:869.55px;width:20px;top:458.2px;text-align:left;font-size:8.2px;">Rp</span>
<span class="c" style="left:864.25px;width:47.6px;top:458.2px;text-align:right;font-size:8.2px;">54,000</span>
<span class="c" style="left:649.5px;width:19.25px;top:468.2px;text-align:center;font-size:8.2px;">13</span>
<svg style="left:651px;top:467px" width="3" height="3"><path d="M0 0H3L0 3Z" fill="#1e6b3c"/></svg>
<span class="c" style="left:670.45px;width:115.75px;top:468.2px;text-align:left;font-size:8.2px;">SKI</span>
<span class="c" style="left:784.5px;width:27.25px;top:468.2px;text-align:center;font-size:8.2px;">1</span>
<span class="c" style="left:817.05px;width:20px;top:468.2px;text-align:left;font-size:8.2px;">Rp</span>
<span class="c" style="left:811.75px;width:48.1px;top:468.2px;text-align:right;font-size:8.2px;">47,000</span>
<span class="c" style="left:869.55px;width:20px;top:468.2px;text-align:left;font-size:8.2px;">Rp</span>
<span class="c" style="left:864.25px;width:47.6px;top:468.2px;text-align:right;font-size:8.2px;">47,000</span>
<div style="left:917.25px;top:466.82px;width:28.75px;height:9.565px;overflow:hidden;"><span class="t" style="left:3.5px;top:0.6px;font:8px 'Liberation Sans', sans-serif;color:#000;">Rp   84</span></div>
<div style="left:0px;top:0px;width:960px;height:40px;background:#217346;"></div>
<svg style="left:13.7px;top:5.6px" width="10" height="10" viewBox="0 0 10 10"><path d="M0.6 0.6H9.4V9.4H0.6Z" fill="none" stroke="#fff" stroke-width="1.2"/><rect x="2.6" y="0.6" width="4.8" height="3" fill="#217346" stroke="#fff" stroke-width="0.9"/><rect x="2.4" y="6" width="5.2" height="3.4" fill="#fff"/></svg>
<svg style="left:44.4px;top:5.6px" width="10" height="9.4" viewBox="0 0 10 9.4"><path d="M1 3.4H6A3 3 0 0 1 6 9.2H4.6" fill="none" stroke="#fff" stroke-width="1.3"/><path d="M3.6 0.6L0.8 3.4L3.6 6.2" fill="none" stroke="#fff" stroke-width="1.3"/></svg>
<svg style="left:60.44px;top:8.84px" width="3.52" height="1.92"><path d="M0 0H3.52L1.76 1.92Z" fill="#fff"/></svg>
<svg style="left:75px;top:5.6px" width="10" height="9.4" viewBox="0 0 10 9.4"><path d="M9 3.4H4A3 3 0 0 0 4 9.2H5.4" fill="none" stroke="#5b9a78" stroke-width="1.3"/><path d="M6.4 0.6L9.2 3.4L6.4 6.2" fill="none" stroke="#5b9a78" stroke-width="1.3"/></svg>
<svg style="left:91.44px;top:8.84px" width="3.52" height="1.92"><path d="M0 0H3.52L1.76 1.92Z" fill="#5b9a78"/></svg>
<svg style="left:106px;top:4.6px" width="11.5" height="11.5" viewBox="0 0 11.5 11.5"><rect x="0.5" y="1.6" width="7.6" height="9" fill="#fff"/><rect x="2.4" y="0.2" width="3.8" height="2.4" fill="#fff"/><rect x="2.2" y="3.4" width="3" height="5" fill="#217346"/><rect x="5.4" y="5.2" width="5.4" height="5.8" fill="#217346" stroke="#fff" stroke-width="0.9"/></svg>
<svg style="left:122.44px;top:8.84px" width="3.52" height="1.92"><path d="M0 0H3.52L1.76 1.92Z" fill="#fff"/></svg>
<svg style="left:139.5px;top:4.6px" width="11.5" height="11.5" viewBox="0 0 11.5 11.5"><path d="M0.6 0.6H6L8.4 3V10.6H0.6Z" fill="none" stroke="#fff" stroke-width="1.1"/><circle cx="5.6" cy="6.2" r="2.3" fill="#217346" stroke="#fff" stroke-width="1.1"/><path d="M7.3 8L10.4 11" stroke="#fff" stroke-width="1.4"/></svg>
<div style="left:174px;top:7.6px;width:4.2px;height:1px;background:#fff;"></div>
<svg style="left:174.34px;top:9.84px" width="3.52" height="1.92"><path d="M0 0H3.52L1.76 1.92Z" fill="#fff"/></svg>
<span class="t" style="left:370.5px;top:6.242px;font:normal 8.6px 'Liberation Sans', sans-serif;letter-spacing:-0.202px;color:#fff;-webkit-text-stroke:0.2px #fff;">Order Buku TS 2324 .xlsx - Excel (Product Activation Failed)</span>
<svg style="left:841.9px;top:7.2px" width="10" height="6.6" viewBox="0 0 10 6.6"><rect x="0.5" y="0.5" width="9" height="5.6" fill="none" stroke="#fff" stroke-width="1"/><path d="M5 1.6L7.4 3.8H6V5H4V3.8H2.6Z" fill="#fff"/></svg>
<div style="left:875.4px;top:11.2px;width:6.6px;height:1.5px;background:#fff;"></div>
<svg style="left:907.9px;top:7.2px" width="7.4" height="6.6" viewBox="0 0 7.4 6.6"><rect x="0.5" y="1.9" width="5" height="4.2" fill="none" stroke="#fff" stroke-width="1"/><path d="M1.9 1.9V0.5H6.9V4.7H5.5" fill="none" stroke="#fff" stroke-width="1"/></svg>
<svg style="left:940.4px;top:7.6px" width="6.6" height="6" viewBox="0 0 6.6 6"><path d="M0.5 0.3L6.1 5.7M6.1 0.3L0.5 5.7" stroke="#fff" stroke-width="1.4"/></svg>
<div style="left:44.4px;top:23px;width:42px;height:18px;background:#f1f1f1;"></div>
<span class="t" style="left:14.2px;top:26.436px;font:normal 8.8px 'Liberation Sans', sans-serif;letter-spacing:-0.462px;color:#fff;-webkit-text-stroke:0.25px #fff;">File</span>
<span class="t" style="left:54px;top:26.436px;font:normal 8.8px 'Liberation Sans', sans-serif;letter-spacing:-0.323px;color:#217346;-webkit-text-stroke:0.25px #217346;">Home</span>
<span class="t" style="left:96.5px;top:26.436px;font:normal 8.8px 'Liberation Sans', sans-serif;letter-spacing:-0.203px;color:#fff;-webkit-text-stroke:0.25px #fff;">Insert</span>
<span class="t" style="left:137.5px;top:26.436px;font:normal 8.8px 'Liberation Sans', sans-serif;letter-spacing:-0.341px;color:#fff;-webkit-text-stroke:0.25px #fff;">Page Layout</span>
<span class="t" style="left:203.5px;top:26.436px;font:normal 8.8px 'Liberation Sans', sans-serif;letter-spacing:-0.310px;color:#fff;-webkit-text-stroke:0.25px #fff;">Formulas</span>
<span class="t" style="left:258.5px;top:26.436px;font:normal 8.8px 'Liberation Sans', sans-serif;letter-spacing:-0.528px;color:#fff;-webkit-text-stroke:0.25px #fff;">Data</span>
<span class="t" style="left:295.5px;top:26.436px;font:normal 8.8px 'Liberation Sans', sans-serif;letter-spacing:-0.528px;color:#fff;-webkit-text-stroke:0.25px #fff;">Review</span>
<span class="t" style="left:342px;top:26.436px;font:normal 8.8px 'Liberation Sans', sans-serif;letter-spacing:-0.474px;color:#fff;-webkit-text-stroke:0.25px #fff;">View</span>
<svg style="left:380.5px;top:26px" width="6.5" height="10" viewBox="0 0 6.5 10"><path d="M3.2 0.6A2.6 2.6 0 0 1 4.7 5.4V7H1.7V5.4A2.6 2.6 0 0 1 3.2 0.6Z" fill="none" stroke="#cfe3d7" stroke-width="0.9"/><path d="M1.9 8.2H4.5M2.3 9.4H4.1" stroke="#cfe3d7" stroke-width="0.8"/></svg>
<span class="t" style="left:392.7px;top:26.336px;font:normal 8.8px 'Liberation Sans', sans-serif;letter-spacing:-0.169px;color:#b4d3c1;">Tell me what you want to do...</span>
<span class="t" style="left:875.8px;top:26.436px;font:normal 8.8px 'Liberation Sans', sans-serif;letter-spacing:-0.318px;color:#fff;-webkit-text-stroke:0.25px #fff;">Sign in</span>
<div style="left:907.9px;top:23px;width:52.1px;height:16.5px;background:#196339;"></div>
<svg style="left:912.9px;top:26.4px" width="10.5" height="10.4" viewBox="0 0 10.5 10.4"><circle cx="4.6" cy="3.2" r="2.6" fill="none" stroke="#fff" stroke-width="1.1"/><path d="M0.5 10C0.7 7.2 2.4 5.9 4.6 5.9C5.6 5.9 6.4 6.1 7 6.6" fill="none" stroke="#fff" stroke-width="1.1"/><path d="M8 6.6V10.4M6.1 8.5H9.9" stroke="#fff" stroke-width="1.1"/></svg>
<span class="t" style="left:926.4px;top:26.436px;font:normal 8.8px 'Liberation Sans', sans-serif;letter-spacing:-0.528px;color:#fff;-webkit-text-stroke:0.25px #fff;">Share</span>
<div style="left:0px;top:40px;width:960px;height:64px;background:#f1f1f1;"></div>
<div style="left:0px;top:40px;width:960px;height:1px;background:#e4efe8;"></div>
<div style="left:44.4px;top:40px;width:42px;height:1px;background:#f1f1f1;"></div>
<div style="left:110.6px;top:43px;width:1px;height:59px;background:#d6d6d6;"></div>
<div style="left:256.6px;top:43px;width:1px;height:59px;background:#d6d6d6;"></div>
<div style="left:464.2px;top:43px;width:1px;height:59px;background:#d6d6d6;"></div>
<div style="left:562.5px;top:43px;width:1px;height:59px;background:#d6d6d6;"></div>
<div style="left:689.7px;top:43px;width:1px;height:59px;background:#d6d6d6;"></div>
<div style="left:785.8px;top:43px;width:1px;height:59px;background:#d6d6d6;"></div>
<div style="left:916.4px;top:43px;width:1px;height:59px;background:#d6d6d6;"></div>
<svg style="left:9px;top:45.4px" width="20.4" height="21.8" viewBox="0 0 20.4 21.8"><rect x="0" y="2.4" width="17.2" height="16.6" rx="0.8" fill="#eac282"/>
<rect x="4.2" y="0.2" width="8.8" height="4.2" rx="0.8" fill="#6b6b6b"/><rect x="6.8" y="0" width="3.6" height="2" fill="#6b6b6b"/>
<path d="M10.6 7.6H16.4L19.8 11V21.3H10.6Z" fill="#fff" stroke="#8a8a8a" stroke-width="0.8"/><path d="M16.4 7.6V11H19.8" fill="none" stroke="#8a8a8a" stroke-width="0.8"/></svg>
<span class="t" style="left:7.9px;top:69.142px;font:normal 8.6px 'Liberation Sans', sans-serif;letter-spacing:-0.516px;color:#3b3b3b;">Paste</span>
<svg style="left:15px;top:83.6px" width="4.4" height="2.4"><path d="M0 0H4.4L2.2 2.4Z" fill="#555"/></svg>
<svg style="left:35px;top:44.4px" width="10.4" height="10.8" viewBox="0 0 10.4 10.8"><path d="M2.2 0.4L7.4 7.4M8.2 0.4L3 7.4" stroke="#5a5a5a" stroke-width="1.1" fill="none"/>
<circle cx="2.4" cy="8.6" r="1.7" fill="none" stroke="#2e75b6" stroke-width="1"/><circle cx="8" cy="8.6" r="1.7" fill="none" stroke="#2e75b6" stroke-width="1"/></svg>
<span class="t" style="left:48.1px;top:45.342px;font:normal 8.6px 'Liberation Sans', sans-serif;letter-spacing:-0.237px;color:#3b3b3b;">Cut</span>
<svg style="left:34.4px;top:61.2px" width="10.8" height="9.6" viewBox="0 0 10.8 9.6"><path d="M0.5 0.5H4.4L6 2.1V6.8H0.5Z" fill="#fff" stroke="#777" stroke-width="0.8"/><path d="M1.6 2.6H4.6M1.6 4H4.6M1.6 5.4H4.6" stroke="#2e75b6" stroke-width="0.5"/>
<path d="M4.6 2.8H8.6L10.3 4.5V9.2H4.6Z" fill="#fff" stroke="#777" stroke-width="0.8"/><path d="M5.8 5H8.8M5.8 6.4H8.8M5.8 7.8H8.8" stroke="#2e75b6" stroke-width="0.5"/></svg>
<span class="t" style="left:48.1px;top:61.642px;font:normal 8.6px 'Liberation Sans', sans-serif;letter-spacing:-0.221px;color:#3b3b3b;">Copy</span>
<svg style="left:73.8px;top:65.2px" width="4.4" height="2.4"><path d="M0 0H4.4L2.2 2.4Z" fill="#555"/></svg>
<svg style="left:35px;top:76.6px" width="10.8" height="10" viewBox="0 0 10.8 10"><path d="M6.6 3.2L9.6 0.6L10.4 1.6L7.6 4.4Z" fill="#555"/><path d="M4.4 3.2L7.6 6.2L6.4 7.2L3.4 4.2Z" fill="#444"/>
<path d="M3.2 4.4L6.2 7.4L3.2 9.8L0.2 6.6Z" fill="#e9b765"/></svg>
<span class="t" style="left:48.1px;top:77.242px;font:normal 8.6px 'Liberation Sans', sans-serif;letter-spacing:-0.173px;color:#3b3b3b;">Format Painter</span>
<span class="t" style="left:31.9px;top:93.848px;font:normal 8.4px 'Liberation Sans', sans-serif;letter-spacing:-0.082px;color:#6a6a6a;">Clipboard</span>
<svg style="left:102.6px;top:97px" width="5" height="5" viewBox="0 0 5 5"><path d="M0.4 3V0.4H3" fill="none" stroke="#777" stroke-width="0.8"/><path d="M1.8 1.8L4.4 4.4M4.6 2.4V4.6H2.4" fill="none" stroke="#777" stroke-width="0.8"/></svg>
<div style="left:114.2px;top:48px;width:77px;height:15.5px;background:#fff;border:1px solid #c6c6c6;"></div>
<div style="left:192.2px;top:48px;width:29.4px;height:15.5px;background:#fff;border:1px solid #c6c6c6;"></div>
<span class="t" style="left:116.1px;top:51.342px;font:normal 8.6px 'Liberation Sans', sans-serif;letter-spacing:-0.076px;color:#3b3b3b;">Arial</span>
<svg style="left:184.2px;top:55px" width="4.4" height="2.4"><path d="M0 0H4.4L2.2 2.4Z" fill="#555"/></svg>
<span class="t" style="left:194.3px;top:51.554px;font:normal 8.2px 'Liberation Sans', sans-serif;letter-spacing:-0.492px;color:#3b3b3b;">11</span>
<svg style="left:214.3px;top:55px" width="4.4" height="2.4"><path d="M0 0H4.4L2.2 2.4Z" fill="#555"/></svg>
<span class="t" style="left:118.4px;top:72.33px;font:bold 9px 'Liberation Sans', sans-serif;letter-spacing:-0.540px;color:#333;">B</span>
<span class="t" style="left:134.6px;top:72.33px;font:bold 9px 'Liberation Serif', serif;letter-spacing:-0.516px;color:#333;font-style:italic;">I</span>
<span class="t" style="left:149.4px;top:72.13px;font:normal 9px 'Liberation Sans', sans-serif;letter-spacing:-0.540px;color:#333;">U</span>
<div style="left:149.2px;top:82.2px;width:6.2px;height:0.9px;background:#333;"></div>
<svg style="left:161.7px;top:75.8px" width="4.4" height="2.4"><path d="M0 0H4.4L2.2 2.4Z" fill="#555"/></svg>
<div style="left:171.7px;top:70px;width:1px;height:14.4px;background:#d6d6d6;"></div>
<svg style="left:177.7px;top:72.2px" width="9.4" height="9.4" viewBox="0 0 9.4 9.4"><path d="M0.5 0.5H8.9V8.9H0.5ZM4.7 0.5V8.9M0.5 4.7H8.9" fill="none" stroke="#bdbdbd" stroke-width="0.9"/></svg>
<svg style="left:192px;top:75.8px" width="4.4" height="2.4"><path d="M0 0H4.4L2.2 2.4Z" fill="#555"/></svg>
<div style="left:201.7px;top:70px;width:1px;height:14.4px;background:#d6d6d6;"></div>
<svg style="left:207.4px;top:71px" width="11.4" height="9.6" viewBox="0 0 11.4 9.6"><path d="M2.4 4.2L5.2 1.4L8.8 5L5.6 8.2Q4.8 8.8 4 8L2.4 6.4Q1.6 5.4 2.4 4.2Z" fill="#fff" stroke="#555" stroke-width="0.8"/>
<path d="M4.2 2.6V0.9Q5 0 5.8 0.9V2" fill="none" stroke="#555" stroke-width="0.7"/><path d="M8.6 4.2Q10.8 5.6 9.8 7.4Q8.4 7 8.6 4.2Z" fill="#2e75b6"/></svg>
<div style="left:207.4px;top:80.2px;width:11.2px;height:2.4px;background:#f8f032;"></div>
<svg style="left:222.2px;top:75.8px" width="4.4" height="2.4"><path d="M0 0H4.4L2.2 2.4Z" fill="#555"/></svg>
<span class="t" style="left:226.5px;top:50.088px;font:normal 10.4px 'Liberation Sans', sans-serif;letter-spacing:-0.338px;color:#444;">A</span>
<svg style="left:232.6px;top:50.4px" width="3.4" height="2.2" viewBox="0 0 3.4 2.2"><path d="M0 2.2L1.7 0L3.4 2.2Z" fill="#2e75b6"/></svg>
<span class="t" style="left:242.5px;top:51.742px;font:normal 8.6px 'Liberation Sans', sans-serif;letter-spacing:-0.134px;color:#444;">A</span>
<svg style="left:247.6px;top:50.6px" width="3.4" height="2.2" viewBox="0 0 3.4 2.2"><path d="M0 0H3.4L1.7 2.2Z" fill="#2e75b6"/></svg>
<span class="t" style="left:233.4px;top:71.212px;font:normal 9.6px 'Liberation Sans', sans-serif;letter-spacing:0.394px;color:#333;-webkit-text-stroke:0.2px #333;">A</span>
<div style="left:231px;top:80.1px;width:11.8px;height:2.6px;background:#e8121d;"></div>
<svg style="left:246.3px;top:75.8px" width="4.4" height="2.4"><path d="M0 0H4.4L2.2 2.4Z" fill="#555"/></svg>
<span class="t" style="left:169.9px;top:93.848px;font:normal 8.4px 'Liberation Sans', sans-serif;letter-spacing:-0.189px;color:#6a6a6a;">Font</span>
<svg style="left:249.6px;top:97px" width="5" height="5" viewBox="0 0 5 5"><path d="M0.4 3V0.4H3" fill="none" stroke="#777" stroke-width="0.8"/><path d="M1.8 1.8L4.4 4.4M4.6 2.4V4.6H2.4" fill="none" stroke="#777" stroke-width="0.8"/></svg>
<div style="left:261.9px;top:49.3px;width:10px;height:1px;background:#878787;"></div>
<div style="left:261.9px;top:51.7px;width:10px;height:1px;background:#878787;"></div>
<div style="left:261.9px;top:54.1px;width:10px;height:1px;background:#878787;"></div>
<div style="left:277.3px;top:52px;width:10px;height:1px;background:#878787;"></div>
<div style="left:277.3px;top:54.5px;width:10px;height:1px;background:#878787;"></div>
<div style="left:277.3px;top:57px;width:10px;height:1px;background:#878787;"></div>
<div style="left:290px;top:47.8px;width:16px;height:16px;background:#c6c6c6;"></div>
<div style="left:293px;top:55.8px;width:10px;height:1px;background:#878787;"></div>
<div style="left:293px;top:58.2px;width:10px;height:1px;background:#878787;"></div>
<div style="left:293px;top:60.7px;width:10px;height:1px;background:#878787;"></div>
<div style="left:309px;top:48px;width:1px;height:15px;background:#d6d6d6;"></div>
<svg style="left:313.6px;top:49.6px" width="12.4" height="11" viewBox="0 0 12.4 11"><text x="0.2" y="7.6" font-family="Liberation Sans, sans-serif" font-size="6.4" fill="#444" transform="rotate(-42 3 7)">ab</text><path d="M3.2 10.6L11 3.4M11.2 3.2L8.4 3.8M11.2 3.2L10.6 6" stroke="#555" stroke-width="0.9" fill="none"/></svg>
<svg style="left:327.8px;top:54.4px" width="4.4" height="2.4"><path d="M0 0H4.4L2.2 2.4Z" fill="#555"/></svg>
<div style="left:338.3px;top:47.5px;width:1px;height:15px;background:#d6d6d6;"></div>
<svg style="left:344.6px;top:51.6px" width="9.4" height="7.6" viewBox="0 0 9.4 7.6"><path d="M0 0.4L3.2 3L0 5.6Z" fill="#2e75b6"/><text x="3.6" y="6.4" font-family="Liberation Sans, sans-serif" font-size="7.4" font-weight="bold" fill="#555">¶</text></svg>
<svg style="left:358.3px;top:54.4px" width="4.4" height="2.4"><path d="M0 0H4.4L2.2 2.4Z" fill="#555"/></svg>
<div style="left:368.3px;top:47.5px;width:1px;height:37.5px;background:#d6d6d6;"></div>
<div style="left:261.9px;top:73px;width:10px;height:1px;background:#878787;"></div>
<div style="left:261.9px;top:75.4px;width:6.6px;height:1px;background:#878787;"></div>
<div style="left:261.9px;top:77.8px;width:10px;height:1px;background:#878787;"></div>
<div style="left:261.9px;top:80.2px;width:6.6px;height:1px;background:#878787;"></div>
<div style="left:277.3px;top:73px;width:10px;height:1px;background:#878787;"></div>
<div style="left:279px;top:75.4px;width:6.6px;height:1px;background:#878787;"></div>
<div style="left:277.3px;top:77.8px;width:10px;height:1px;background:#878787;"></div>
<div style="left:279px;top:80.2px;width:6.6px;height:1px;background:#878787;"></div>
<div style="left:293px;top:73px;width:10px;height:1px;background:#878787;"></div>
<div style="left:296.4px;top:75.4px;width:6.6px;height:1px;background:#878787;"></div>
<div style="left:293px;top:77.8px;width:10px;height:1px;background:#878787;"></div>
<div style="left:296.4px;top:80.2px;width:6.6px;height:1px;background:#878787;"></div>
<div style="left:309px;top:70px;width:1px;height:14.4px;background:#d6d6d6;"></div>
<svg style="left:313.7px;top:72px" width="11.6" height="9.8" viewBox="0 0 11.6 9.8"><path d="M0.4 0.6H11.4M6 3H11.4M6 5.2H11.4M6 7.4H11.4M0.4 9.4H11.4" stroke="#8a8a8a" stroke-width="0.9"/><path d="M5.2 4.2H1M2.8 2.4L0.8 4.2L2.8 6" stroke="#2e75b6" stroke-width="1" fill="none"/></svg>
<svg style="left:329.3px;top:72px" width="11.6" height="9.8" viewBox="0 0 11.6 9.8"><path d="M0.4 0.6H11.4M6 3H11.4M6 5.2H11.4M6 7.4H11.4M0.4 9.4H11.4" stroke="#8a8a8a" stroke-width="0.9"/><path d="M0.4 4.2H4.6M2.8 2.4L4.8 4.2L2.8 6" stroke="#2e75b6" stroke-width="1" fill="none"/></svg>
<svg style="left:373.7px;top:50px" width="11.2" height="10.4" viewBox="0 0 11.2 10.4"><path d="M0.4 0.5H6.6V3H0.4ZM0.4 3.8H6.6V6.4H0.4ZM0.4 7.2H6.6V9.8H0.4Z" fill="#fff" stroke="#777" stroke-width="0.7"/><path d="M1.4 1.8H5.4M1.4 5.1H5.4M1.4 8.5H5.4" stroke="#9a9a9a" stroke-width="0.6"/><path d="M7.4 1.6Q10.6 1.4 10.4 4Q10.2 5.6 8 5.4M8.8 4.2L7.6 5.4L9 6.4" fill="none" stroke="#2e75b6" stroke-width="0.9"/></svg>
<span class="t" style="left:387.5px;top:50.942px;font:normal 8.6px 'Liberation Sans', sans-serif;letter-spacing:-0.272px;color:#3b3b3b;">Wrap Text</span>
<svg style="left:373.7px;top:71.3px" width="11.2" height="10.4" viewBox="0 0 11.2 10.4"><path d="M0.4 0.5H10.8V9.9H0.4ZM0.4 3H10.8M0.4 7.4H10.8M5.6 0.5V3M5.6 7.4V9.9" fill="#fff" stroke="#666" stroke-width="0.8"/><path d="M2 5.2H9.2M3 4.2L1.8 5.2L3 6.2M8.2 4.2L9.4 5.2L8.2 6.2" stroke="#2e75b6" stroke-width="0.7" fill="none"/></svg>
<span class="t" style="left:387.5px;top:72.242px;font:normal 8.6px 'Liberation Sans', sans-serif;letter-spacing:-0.090px;color:#3b3b3b;">Merge &amp; Center</span>
<svg style="left:453.6px;top:76.1px" width="4.4" height="2.4"><path d="M0 0H4.4L2.2 2.4Z" fill="#555"/></svg>
<span class="t" style="left:336.2px;top:93.848px;font:normal 8.4px 'Liberation Sans', sans-serif;letter-spacing:-0.056px;color:#6a6a6a;">Alignment</span>
<svg style="left:455.6px;top:97px" width="5" height="5" viewBox="0 0 5 5"><path d="M0.4 3V0.4H3" fill="none" stroke="#777" stroke-width="0.8"/><path d="M1.8 1.8L4.4 4.4M4.6 2.4V4.6H2.4" fill="none" stroke="#777" stroke-width="0.8"/></svg>
<div style="left:467.5px;top:48px;width:92px;height:15.5px;background:#fff;border:1px solid #c6c6c6;"></div>
<span class="t" style="left:470px;top:50.942px;font:normal 8.6px 'Liberation Sans', sans-serif;letter-spacing:-0.516px;color:#3b3b3b;">General</span>
<svg style="left:552px;top:55px" width="4.4" height="2.4"><path d="M0 0H4.4L2.2 2.4Z" fill="#555"/></svg>
<span class="t" style="left:472.6px;top:70.682px;font:normal 10.6px 'Liberation Sans', sans-serif;letter-spacing:-0.636px;color:#444;">$</span>
<svg style="left:484.5px;top:76.1px" width="4.4" height="2.4"><path d="M0 0H4.4L2.2 2.4Z" fill="#555"/></svg>
<span class="t" style="left:494.7px;top:70.682px;font:normal 10.6px 'Liberation Sans', sans-serif;letter-spacing:0.078px;color:#444;">%</span>
<span class="t" style="left:512.2px;top:66.01px;font:bold 13px 'Liberation Serif', serif;letter-spacing:-0.250px;color:#444;">,</span>
<div style="left:525.3px;top:70px;width:1px;height:14.7px;background:#d6d6d6;"></div>
<svg style="left:530.8px;top:72px" width="10.6" height="9.8" viewBox="0 0 10.6 9.8"><path d="M3.6 1.8H0.8M2 0.6L0.6 1.8L2 3" stroke="#2e75b6" stroke-width="0.8" fill="none"/><text x="4.4" y="4" font-family="Liberation Sans, sans-serif" font-size="5.4" fill="#333">.0</text><text x="1.8" y="9.2" font-family="Liberation Sans, sans-serif" font-size="5.4" fill="#333">.00</text></svg>
<svg style="left:546.3px;top:72px" width="10.6" height="9.8" viewBox="0 0 10.6 9.8"><text x="2.4" y="4" font-family="Liberation Sans, sans-serif" font-size="5.4" fill="#333">.00</text><path d="M0.4 7.4H3.4M2.2 6.2L3.6 7.4L2.2 8.6" stroke="#2e75b6" stroke-width="0.8" fill="none"/><text x="4.6" y="9.2" font-family="Liberation Sans, sans-serif" font-size="5.4" fill="#333">.0</text></svg>
<span class="t" style="left:493.8px;top:93.848px;font:normal 8.4px 'Liberation Sans', sans-serif;letter-spacing:-0.319px;color:#6a6a6a;">Number</span>
<svg style="left:554.6px;top:97px" width="5" height="5" viewBox="0 0 5 5"><path d="M0.4 3V0.4H3" fill="none" stroke="#777" stroke-width="0.8"/><path d="M1.8 1.8L4.4 4.4M4.6 2.4V4.6H2.4" fill="none" stroke="#777" stroke-width="0.8"/></svg>
<svg style="left:581.3px;top:45.3px" width="21" height="21" viewBox="0 0 21 21"><rect x="0.4" y="0.4" width="18" height="16" fill="#fff" stroke="#b5b5b5" stroke-width="0.8"/>
<path d="M0.4 4.4H18.4M0.4 8.4H18.4M0.4 12.4H18.4M5 0.4V16.4M14 0.4V16.4" stroke="#c4c4c4" stroke-width="0.6"/>
<rect x="5.4" y="0.8" width="4" height="3.4" fill="#d9683c"/><rect x="5.4" y="4.8" width="7.6" height="3.4" fill="#3b7fc4"/><rect x="5.4" y="8.8" width="5" height="3.4" fill="#d9683c"/><rect x="5.4" y="12.8" width="3" height="3.4" fill="#3b7fc4"/>
<rect x="10.4" y="11.4" width="10" height="9" fill="#fff" stroke="#666" stroke-width="0.8"/><text x="12.6" y="19" font-family="Liberation Sans, sans-serif" font-size="8" fill="#333">≠</text></svg>
<span class="t" style="left:570px;top:69.242px;font:normal 8.6px 'Liberation Sans', sans-serif;letter-spacing:-0.050px;color:#3b3b3b;">Conditional</span>
<span class="t" style="left:567.5px;top:80.042px;font:normal 8.6px 'Liberation Sans', sans-serif;letter-spacing:-0.064px;color:#3b3b3b;">Formatting</span>
<svg style="left:610.2px;top:84px" width="4.4" height="2.4"><path d="M0 0H4.4L2.2 2.4Z" fill="#555"/></svg>
<svg style="left:627px;top:46.7px" width="20.6" height="20" viewBox="0 0 20.6 20"><rect x="0.4" y="0.4" width="16" height="13.6" fill="#fff" stroke="#a8a8a8" stroke-width="0.8"/>
<rect x="4.6" y="3.8" width="11.4" height="6.6" fill="#c5d9f0"/>
<path d="M0.4 3.8H16.4M0.4 7.2H16.4M0.4 10.6H16.4M4.4 0.4V14M8.4 0.4V14M12.4 0.4V14" stroke="#9a9a9a" stroke-width="0.6"/>
<path d="M19.8 3.4L12.6 12.4L14.2 13.8L20.6 4.4Z" fill="#5d5d5d"/><path d="M12.4 12.6Q9 13 6 18.6Q11 19.6 14.4 14.2Z" fill="#3b7fc4"/></svg>
<span class="t" style="left:618px;top:69.242px;font:normal 8.6px 'Liberation Sans', sans-serif;letter-spacing:-0.311px;color:#3b3b3b;">Format as</span>
<span class="t" style="left:625px;top:80.042px;font:normal 8.6px 'Liberation Sans', sans-serif;letter-spacing:-0.516px;color:#3b3b3b;">Table</span>
<svg style="left:644.8px;top:84px" width="4.4" height="2.4"><path d="M0 0H4.4L2.2 2.4Z" fill="#555"/></svg>
<svg style="left:661.7px;top:46.7px" width="20.8" height="20" viewBox="0 0 20.8 20"><rect x="0.4" y="0.4" width="16.6" height="13.6" fill="#fff" stroke="#a8a8a8" stroke-width="0.8"/>
<path d="M0.4 3.4H17M0.4 10.4H17M4 0.4V14M13.4 0.4V14" stroke="#b0b0b0" stroke-width="0.6"/>
<rect x="4" y="3.4" width="9.4" height="7" fill="#bcd3ee" stroke="#7fa6d6" stroke-width="0.6"/>
<path d="M20 3.4L12.8 12.4L14.4 13.8L20.8 4.4Z" fill="#5d5d5d"/><path d="M12.6 12.6Q9.2 13 6.2 18.6Q11.2 19.6 14.6 14.2Z" fill="#3b7fc4"/></svg>
<span class="t" style="left:664.2px;top:69.242px;font:normal 8.6px 'Liberation Sans', sans-serif;letter-spacing:-0.337px;color:#3b3b3b;">Cell</span>
<span class="t" style="left:658px;top:80.042px;font:normal 8.6px 'Liberation Sans', sans-serif;letter-spacing:-0.516px;color:#3b3b3b;">Styles</span>
<svg style="left:680.6px;top:84px" width="4.4" height="2.4"><path d="M0 0H4.4L2.2 2.4Z" fill="#555"/></svg>
<span class="t" style="left:615.8px;top:93.848px;font:normal 8.4px 'Liberation Sans', sans-serif;letter-spacing:-0.504px;color:#6a6a6a;">Styles</span>
<svg style="left:698.3px;top:45.8px" width="18.6" height="19.4" viewBox="0 0 18.6 19.4"><path d="M0.5 0.5H10.5V4H0.5ZM5.5 0.5V4" fill="#fff" stroke="#8a8a8a" stroke-width="0.8"/>
<rect x="8.4" y="5.8" width="9.6" height="3.6" fill="#c5d9f0" stroke="#7f9fc6" stroke-width="0.7"/><path d="M13.2 5.8V9.4" stroke="#7f9fc6" stroke-width="0.7"/>
<path d="M7 7.6H1.4M3.4 5.8L1.2 7.6L3.4 9.4" stroke="#2e75b6" stroke-width="1" fill="none"/>
<path d="M0.5 11.6H10.5V18.6H0.5ZM5.5 11.6V18.6M0.5 15.1H10.5" fill="#fff" stroke="#8a8a8a" stroke-width="0.8"/></svg>
<span class="t" style="left:697.5px;top:69.242px;font:normal 8.6px 'Liberation Sans', sans-serif;letter-spacing:-0.360px;color:#3b3b3b;">Insert</span>
<svg style="left:705.3px;top:83.8px" width="4.4" height="2.4"><path d="M0 0H4.4L2.2 2.4Z" fill="#555"/></svg>
<svg style="left:727.5px;top:45.8px" width="20.4" height="19.4" viewBox="0 0 20.4 19.4"><path d="M0.5 0.5H10.5V4H0.5ZM5.5 0.5V4" fill="#fff" stroke="#8a8a8a" stroke-width="0.8"/>
<rect x="4.6" y="5.8" width="6" height="3.6" fill="#c5d9f0" stroke="#7f9fc6" stroke-width="0.7"/>
<path d="M11.4 3.4L19.6 11.4M19.6 3.4L11.4 11.4" stroke="#d85a38" stroke-width="1.2"/>
<path d="M0.5 11.6H10.5V18.6H0.5ZM5.5 11.6V18.6M0.5 15.1H10.5" fill="#fff" stroke="#8a8a8a" stroke-width="0.8"/></svg>
<span class="t" style="left:725.8px;top:69.242px;font:normal 8.6px 'Liberation Sans', sans-serif;letter-spacing:-0.516px;color:#3b3b3b;">Delete</span>
<svg style="left:734.5px;top:83.8px" width="4.4" height="2.4"><path d="M0 0H4.4L2.2 2.4Z" fill="#555"/></svg>
<svg style="left:756.5px;top:44px" width="20.4" height="22.4" viewBox="0 0 20.4 22.4"><path d="M1 1.6H19.4M1 0V3.2M19.4 0V3.2M3.4 0.4L1.2 1.6L3.4 2.8M17 0.4L19.2 1.6L17 2.8" stroke="#2e75b6" stroke-width="0.8" fill="none"/>
<path d="M0.6 5.4H19.8V19H14.4L13.4 20.4H7L6 19H0.6Z" fill="#fff" stroke="#9a9a9a" stroke-width="0.8"/>
<path d="M0.6 10H19.8M0.6 14.6H19.8M5.4 5.4V19M10.2 5.4V19M15 5.4V19" stroke="#b8b8b8" stroke-width="0.6"/>
<rect x="7.4" y="8.6" width="5.6" height="7.4" fill="#2e75b6"/></svg>
<span class="t" style="left:753.7px;top:69.142px;font:normal 8.6px 'Liberation Sans', sans-serif;letter-spacing:-0.184px;color:#3b3b3b;">Format</span>
<svg style="left:764.8px;top:83.6px" width="4.4" height="2.4"><path d="M0 0H4.4L2.2 2.4Z" fill="#555"/></svg>
<span class="t" style="left:729.2px;top:93.848px;font:normal 8.4px 'Liberation Sans', sans-serif;letter-spacing:-0.504px;color:#6a6a6a;">Cells</span>
<svg style="left:790.9px;top:44.6px" width="10" height="10.4" viewBox="0 0 10 10.4"><path d="M9.4 2.4V0.6H0.8L5.2 5.2L0.8 9.8H9.4V8" fill="none" stroke="#444" stroke-width="1.2"/></svg>
<span class="t" style="left:804.6px;top:45.042px;font:normal 8.6px 'Liberation Sans', sans-serif;letter-spacing:-0.160px;color:#3b3b3b;">AutoSum</span>
<svg style="left:845.5px;top:49.4px" width="4.4" height="2.4"><path d="M0 0H4.4L2.2 2.4Z" fill="#555"/></svg>
<svg style="left:791.6px;top:60.2px" width="9.4" height="10.8" viewBox="0 0 9.4 10.8"><rect x="0.5" y="0.5" width="8.4" height="9.8" fill="#fff" stroke="#666" stroke-width="0.8"/><rect x="0.5" y="0.5" width="8.4" height="2" fill="#555"/><path d="M4.7 3.8V8.4M2.6 6.4L4.7 8.6L6.8 6.4" stroke="#2e75b6" stroke-width="1" fill="none"/></svg>
<span class="t" style="left:804.6px;top:61.142px;font:normal 8.6px 'Liberation Sans', sans-serif;letter-spacing:-0.361px;color:#3b3b3b;">Fill</span>
<svg style="left:816.6px;top:65.4px" width="4.4" height="2.4"><path d="M0 0H4.4L2.2 2.4Z" fill="#555"/></svg>
<svg style="left:791.6px;top:77.8px" width="10" height="9.4" viewBox="0 0 10 9.4"><path d="M5.8 0.4L9.6 3.6L4.8 8L1 4.8Z" fill="#e8747c"/><path d="M1 4.8L4.8 8L3.8 8.8H1.6L0.2 7.4Z" fill="#f4c3c6"/><path d="M1 9H9.6" stroke="#aaa" stroke-width="0.6"/></svg>
<span class="t" style="left:804.6px;top:77.142px;font:normal 8.6px 'Liberation Sans', sans-serif;letter-spacing:-0.516px;color:#3b3b3b;">Clear</span>
<svg style="left:824.6px;top:81.4px" width="4.4" height="2.4"><path d="M0 0H4.4L2.2 2.4Z" fill="#555"/></svg>
<svg style="left:858px;top:46.4px" width="19.8" height="18.6" viewBox="0 0 19.8 18.6"><text x="0" y="8" font-family="Liberation Sans, sans-serif" font-size="10.4" font-weight="bold" fill="#2e75b6">A</text><text x="0.2" y="18.4" font-family="Liberation Sans, sans-serif" font-size="10.4" font-weight="bold" fill="#8e44ad">Z</text>
<path d="M8.8 5H20L15.8 9.8V14.6L13.2 13.2V9.8Z" fill="#7a7a7a"/></svg>
<span class="t" style="left:856.4px;top:69.142px;font:normal 8.6px 'Liberation Sans', sans-serif;letter-spacing:-0.198px;color:#3b3b3b;">Sort &amp;</span>
<span class="t" style="left:856.4px;top:80.142px;font:normal 8.6px 'Liberation Sans', sans-serif;letter-spacing:-0.302px;color:#3b3b3b;">Filter</span>
<svg style="left:875.4px;top:84.2px" width="4.4" height="2.4"><path d="M0 0H4.4L2.2 2.4Z" fill="#555"/></svg>
<svg style="left:888.5px;top:45.7px" width="19" height="18.6" viewBox="0 0 19 18.6"><circle cx="12" cy="7" r="5.8" fill="#fff" stroke="#2e75b6" stroke-width="1.6"/><path d="M7.8 11.2L1 18" stroke="#2e75b6" stroke-width="2.2"/></svg>
<span class="t" style="left:886px;top:69.142px;font:normal 8.6px 'Liberation Sans', sans-serif;letter-spacing:-0.169px;color:#3b3b3b;">Find &amp;</span>
<span class="t" style="left:884.4px;top:80.142px;font:normal 8.6px 'Liberation Sans', sans-serif;letter-spacing:-0.516px;color:#3b3b3b;">Select</span>
<svg style="left:907.6px;top:84.2px" width="4.4" height="2.4"><path d="M0 0H4.4L2.2 2.4Z" fill="#555"/></svg>
<span class="t" style="left:838px;top:94.148px;font:normal 8.4px 'Liberation Sans', sans-serif;letter-spacing:-0.052px;color:#6a6a6a;">Editing</span>
<svg style="left:946.4px;top:96.8px" width="6.6" height="4" viewBox="0 0 6.6 4"><path d="M0.4 3.6L3.3 0.6L6.2 3.6" fill="none" stroke="#444" stroke-width="1.3"/></svg>
<div style="left:946px;top:104px;width:14px;height:372px;background:#e6e6e6;"></div>
<div style="left:946px;top:115px;width:14px;height:361px;background:#f0f0f0;"></div>
<div style="left:947.4px;top:107px;width:10.2px;height:10.4px;background:#fff;border:1px solid #c4c4c4;"></div>
<svg style="left:950.2px;top:110.4px" width="4.6" height="2.6" viewBox="0 0 4.6 2.6"><path d="M0 2.6L2.3 0L4.6 2.6Z" fill="#666"/></svg>
<div style="left:947.4px;top:118px;width:10.2px;height:158px;background:#fff;border:1px solid #c4c4c4;"></div>
<div style="left:947.4px;top:466px;width:10.2px;height:10px;background:#fff;border:1px solid #c4c4c4;"></div>
<svg style="left:950.2px;top:470px" width="4.6" height="2.6" viewBox="0 0 4.6 2.6"><path d="M0 0H4.6L2.3 2.6Z" fill="#666"/></svg>
<div style="left:0px;top:476px;width:960px;height:19px;background:#f0f0f0;"></div>
<div style="left:0px;top:476px;width:587px;height:1px;background:#c8c8c8;"></div>
<svg style="left:19px;top:483px" width="3" height="5" viewBox="0 0 3 5"><path d="M3 0V5L0 2.5Z" fill="#c2c2c2"/></svg>
<svg style="left:39.4px;top:483px" width="3" height="5" viewBox="0 0 3 5"><path d="M0 0V5L3 2.5Z" fill="#c2c2c2"/></svg>
<div style="left:71px;top:476px;width:71.5px;height:17.6px;background:linear-gradient(#ffffff 10%,#fbe6d8 55%,#f3c3a4 100%);border-left:1px solid #c8c8c8;border-right:1px solid #c8c8c8;border-bottom:2px solid #217346;"></div>
<span class="t" style="left:79.2px;top:479.942px;font:bold 8.6px 'Liberation Sans', sans-serif;letter-spacing:-0.178px;color:#217346;">BUKU PAKET</span>
<span class="t" style="left:150.75px;top:479.942px;font:normal 8.6px 'Liberation Sans', sans-serif;letter-spacing:-0.516px;color:#444;">LKS</span>
<span class="t" style="left:183.25px;top:479.942px;font:normal 8.6px 'Liberation Sans', sans-serif;letter-spacing:0.477px;color:#444;">order sm2</span>
<span class="t" style="left:243.75px;top:479.942px;font:normal 8.6px 'Liberation Sans', sans-serif;letter-spacing:-0.361px;color:#444;">REKAP ORDER</span>
<span class="t" style="left:322px;top:479.942px;font:normal 8.6px 'Liberation Sans', sans-serif;letter-spacing:0.010px;color:#444;">Sheet2</span>
<span class="t" style="left:367px;top:479.942px;font:normal 8.6px 'Liberation Sans', sans-serif;letter-spacing:-0.516px;color:#444;">TK</span>
<span class="t" style="left:396.75px;top:479.942px;font:normal 8.6px 'Liberation Sans', sans-serif;letter-spacing:-0.167px;color:#444;">BUKU PAKET SMP</span>
<div style="left:174.25px;top:479px;width:1px;height:12px;background:#c6c6c6;"></div>
<div style="left:235px;top:479px;width:1px;height:12px;background:#c6c6c6;"></div>
<div style="left:313.25px;top:479px;width:1px;height:12px;background:#c6c6c6;"></div>
<div style="left:358px;top:479px;width:1px;height:12px;background:#c6c6c6;"></div>
<div style="left:386.75px;top:479px;width:1px;height:12px;background:#c6c6c6;"></div>
<div style="left:478.75px;top:479px;width:1px;height:12px;background:#c6c6c6;"></div>
<svg style="left:503.4px;top:480.2px" width="10.8" height="10.8" viewBox="0 0 10.8 10.8"><circle cx="5.4" cy="5.4" r="4.8" fill="none" stroke="#777" stroke-width="0.9"/><path d="M5.4 2.8V8M2.8 5.4H8" stroke="#666" stroke-width="1"/></svg>
<div style="left:575.8px;top:482.4px;width:1.2px;height:1.2px;background:#9a9a9a;"></div>
<div style="left:575.8px;top:485.2px;width:1.2px;height:1.2px;background:#9a9a9a;"></div>
<div style="left:575.8px;top:488px;width:1.2px;height:1.2px;background:#9a9a9a;"></div>
<div style="left:587px;top:477px;width:359px;height:17px;background:#f0f0f0;"></div>
<div style="left:597.5px;top:481px;width:338px;height:9.6px;background:#e9e9e9;"></div>
<div style="left:587.5px;top:480.6px;width:10px;height:10.2px;background:#fff;border:1px solid #c4c4c4;"></div>
<svg style="left:591.4px;top:483.4px" width="2.6" height="4.6" viewBox="0 0 2.6 4.6"><path d="M2.6 0V4.6L0 2.3Z" fill="#555"/></svg>
<div style="left:616.2px;top:481px;width:300px;height:9.6px;background:#fff;border:1px solid #c4c4c4;"></div>
<div style="left:935.4px;top:480.6px;width:10px;height:10.2px;background:#fff;border:1px solid #c4c4c4;"></div>
<svg style="left:939.2px;top:483.4px" width="2.6" height="4.6" viewBox="0 0 2.6 4.6"><path d="M0 0V4.6L2.6 2.3Z" fill="#555"/></svg>
<div style="left:0px;top:495px;width:960px;height:16px;background:#f1f1f1;"></div>
<div style="left:0px;top:494px;width:960px;height:1px;background:#e2e2e2;"></div>
<span class="t" style="left:5.3px;top:498.048px;font:normal 8.4px 'Liberation Sans', sans-serif;letter-spacing:-0.504px;color:#444;">Ready</span>
<div style="left:756.2px;top:495px;width:23.8px;height:16px;background:#c9c9c9;"></div>
<svg style="left:763px;top:498px" width="9.6" height="9" viewBox="0 0 9.6 9"><path d="M0.5 0.5H9.1V8.5H0.5ZM0.5 3.2H9.1M0.5 5.8H9.1M3.4 0.5V8.5M6.2 0.5V8.5" fill="none" stroke="#555" stroke-width="0.8"/></svg>
<svg style="left:790px;top:498px" width="10" height="9" viewBox="0 0 10 9"><path d="M0.5 0.5H9.5V8.5H0.5Z" fill="none" stroke="#666" stroke-width="0.8"/><path d="M2.6 2.2H7.4V6.8H2.6ZM5 2.2V6.8" fill="none" stroke="#777" stroke-width="0.7"/></svg>
<svg style="left:816.2px;top:498px" width="10.4" height="9" viewBox="0 0 10.4 9"><path d="M0.5 0.5H9.9V8.5H0.5Z" fill="none" stroke="#666" stroke-width="0.8"/><path d="M3.2 0.5V4.6H7.2V0.5M0.5 4.6H3.2" fill="none" stroke="#666" stroke-width="0.8"/></svg>
<div style="left:838.4px;top:502.4px;width:4.2px;height:1.4px;background:#444;"></div>
<div style="left:845px;top:502.8px;width:71.4px;height:0.8px;background:#a8a8a8;"></div>
<div style="left:880.4px;top:500.6px;width:0.8px;height:5px;background:#a8a8a8;"></div>
<div style="left:870.6px;top:498.8px;width:2.4px;height:8.6px;background:#555;"></div>
<div style="left:918.6px;top:502.4px;width:5.6px;height:1.4px;background:#444;"></div>
<div style="left:920.7px;top:500.3px;width:1.4px;height:5.6px;background:#444;"></div>
<span class="t" style="left:935px;top:498.048px;font:normal 8.4px 'Liberation Sans', sans-serif;letter-spacing:-0.504px;color:#444;">77%</span>
<span class="t" style="left:754.4px;top:457.222px;font:normal 12.6px 'Liberation Sans', sans-serif;letter-spacing:0.507px;color:rgba(120,120,120,0.42);">Activate Windows</span>
<span class="t" style="left:754.4px;top:474.718px;font:normal 9.4px 'Liberation Sans', sans-serif;letter-spacing:0.500px;color:rgba(120,120,120,0.42);">Go to Settings to activate Windows.</span>
<div style="left:0px;top:511px;width:960px;height:28px;background:linear-gradient(90deg,#2a2a2a 0%,#2e2e2e 25%,#2e2e2e 32%,#262626 36%,#232323 46%,#1b1b1b 53%,#292929 61%,#1d1d1d 68%,#1c1e20 73%,#21252a 78%,#20242a 100%);"></div>
<svg style="left:10.5px;top:518.8px" width="12.6" height="12" viewBox="0 0 12.6 12"><path d="M0 1.7L5.2 1V5.7H0ZM5.9 0.9L12.6 0V5.7H5.9ZM0 6.4H5.2V11.1L0 10.4ZM5.9 6.4H12.6V12L5.9 11.1Z" fill="#fff"/></svg>
<div style="left:33.8px;top:511.4px;width:201.8px;height:27.6px;background:#f2f2f2;border-top:1px solid #dcdcdc;"></div>
<svg style="left:42.5px;top:520px" width="11.4" height="11" viewBox="0 0 11.4 11"><circle cx="7" cy="4.4" r="3.7" fill="none" stroke="#333" stroke-width="1.1"/><path d="M4.4 7.2L0.6 10.6" stroke="#333" stroke-width="1.2"/></svg>
<span class="t" style="left:62px;top:519.094px;font:normal 10.2px 'Liberation Sans', sans-serif;letter-spacing:-0.016px;color:#4a4a4a;">Type here to search</span>
<svg style="left:183px;top:512.5px" width="50" height="26.5" viewBox="0 0 50 26.5"><defs><radialGradient id="pg" cx="0.4" cy="0.35" r="0.75"><stop offset="0" stop-color="#3aa5f2"/><stop offset="0.6" stop-color="#1b7fd6"/><stop offset="1" stop-color="#0f5bb0"/></radialGradient></defs>
<circle cx="16.6" cy="12.4" r="10" fill="url(#pg)"/>
<path d="M8.6 8.6Q16 5 24 8.4M7.4 13Q16 9.4 26 12.6M8.6 17.6Q17 14 25 17.4" fill="none" stroke="#6cc0f7" stroke-width="1" opacity="0.7"/>
<ellipse cx="14.6" cy="12.6" rx="3.2" ry="1.6" fill="#1466bd"/>
<g fill="#f2c64c"><path d="M5.6 2.4l.7 1.4 1.5.2-1.1 1 .3 1.5-1.4-.7-1.4.7.3-1.5-1.1-1 1.5-.2z"/><circle cx="2.6" cy="10" r="1"/><path d="M32.6 1.8l.7 1.4 1.5.2-1.1 1 .3 1.5-1.4-.7-1.4.7.3-1.5-1.1-1 1.5-.2z"/><circle cx="40.4" cy="8.8" r="1.1"/><circle cx="29" cy="15.2" r="1"/></g>
<path d="M39.6 17L35 26.5M39.6 17L44 26.5M39.6 17V22" stroke="#5a3fb0" stroke-width="1.2" fill="none"/>
<path d="M32 11.6L46.4 15L45.6 18.2L31.4 14.6Z" fill="#b7a6ea"/><path d="M32 11.6L34 12.1L33.3 15.1L31.4 14.6Z" fill="#6a4fc0"/><path d="M44.6 14.4L46.6 14.9L45.7 18.4L43.8 17.9Z" fill="#6a4fc0"/></svg>
<svg style="left:247.4px;top:519px" width="11.6" height="11.6" viewBox="0 0 11.6 11.6"><circle cx="5.8" cy="5.8" r="4.8" fill="none" stroke="#fff" stroke-width="1.5"/></svg>
<svg style="left:281px;top:519.4px" width="11.8" height="10.2" viewBox="0 0 11.8 10.2"><path d="M0.6 1.6H7.6V8.6H0.6Z" fill="none" stroke="#fff" stroke-width="1.1"/><path d="M0.6 0.3H7.6M0.6 9.9H7.6" stroke="#fff" stroke-width="0.7"/><path d="M10 3.4V9.6" stroke="#fff" stroke-width="1.3"/><circle cx="10" cy="1.2" r="0.9" fill="#fff"/></svg>
<div style="left:305.8px;top:511px;width:31.8px;height:28px;background:#474747;"></div>
<div style="left:305.8px;top:537.2px;width:31.8px;height:1.8px;background:#8fbde9;"></div>
<svg style="left:313.8px;top:517.2px" width="17" height="15" viewBox="0 0 17 15"><rect x="6" y="1.4" width="10.6" height="12.2" fill="#fff" stroke="#1e7145" stroke-width="0.9"/><path d="M9.6 1.4V13.6M13 1.4V13.6M6 4.4H16.6M6 7.5H16.6M6 10.6H16.6" stroke="#1e7145" stroke-width="0.9"/><path d="M0 1.6L9.4 0V15L0 13.4Z" fill="#1e7145"/><path d="M2.6 4.8L6.8 10.4M6.8 4.8L2.6 10.4" stroke="#fff" stroke-width="1.3"/></svg>
<svg style="left:348px;top:515.7px" width="18" height="18" viewBox="0 0 18 18"><defs><linearGradient id="eg" x1="0" y1="0" x2="1" y2="1"><stop offset="0" stop-color="#35c1b0"/><stop offset="0.5" stop-color="#1b9de2"/><stop offset="1" stop-color="#0c59a4"/></linearGradient></defs>
<circle cx="9" cy="9" r="8.8" fill="url(#eg)"/><path d="M1 7.4Q3 1 9.6 0.6Q16.4 1 17.6 7Q14 3.4 9 4.2Q4 5 1 7.4Z" fill="#4fd37a" opacity="0.85"/>
<path d="M6.4 9.4Q6.2 6.4 9.6 6Q13.4 6.2 13.6 9Q13.6 10.6 11.6 11H8Q8.6 14.6 13 15.4Q9 17.6 6.6 14.4Q5 12 6.4 9.4Z" fill="#1e2226" opacity="0.78"/></svg>
<svg style="left:382.6px;top:515.7px" width="18" height="18" viewBox="0 0 18 18"><circle cx="9" cy="9" r="8.8" fill="#fff"/>
<path d="M9 9L1.4 4.6A8.8 8.8 0 0 1 16.6 4.6Z" fill="#e33b2e"/><path d="M9 9L16.6 4.6A8.8 8.8 0 0 1 9 17.8Z" fill="#fbc116"/><path d="M9 9L9 17.8A8.8 8.8 0 0 1 1.4 4.6Z" fill="#2da94f"/>
<circle cx="9" cy="9" r="4.2" fill="#fff"/><circle cx="9" cy="9" r="3.3" fill="#3f83ea"/>
<circle cx="12.6" cy="13.2" r="4.2" fill="#3a3f4a"/><circle cx="12.6" cy="11.8" r="1.5" fill="#d9c6b4"/><path d="M9.8 15.6Q12.6 12.4 15.4 15.6Z" fill="#8a93a8"/></svg>
<div style="left:377px;top:537.4px;width:28.6px;height:1.6px;background:#8fbde9;"></div>
<svg style="left:417.9px;top:517.2px" width="16.4" height="15" viewBox="0 0 16.4 15"><rect x="6" y="1" width="10" height="13" fill="#fff" stroke="#2b579a" stroke-width="0.8"/><path d="M10 3.4H14.6M10 5.8H14.6M10 8.2H14.6M10 10.6H14.6" stroke="#2b579a" stroke-width="1"/><path d="M0 1.6L9.4 0V15L0 13.4Z" fill="#2b579a"/><path d="M1.8 4.8L3.2 10.4L4.7 5.6L6.2 10.4L7.6 4.8" stroke="#fff" stroke-width="1.1" fill="none"/></svg>
<svg style="left:452.6px;top:517.6px" width="15.8" height="14" viewBox="0 0 15.8 14"><path d="M0 1.2Q0 0.2 1 0.2H5.6L7 1.8H14.8Q15.8 1.8 15.8 2.8V12.6Q15.8 13.6 14.8 13.6H1Q0 13.6 0 12.6Z" fill="#f5b93b"/><path d="M0 3.6H15.8V12.6Q15.8 13.6 14.8 13.6H1Q0 13.6 0 12.6Z" fill="#fbd766"/><path d="M3.6 8.4H12.2V13.6H3.6Z" fill="#3f8fdc"/><path d="M5.6 10.6H10.2V13.6H5.6Z" fill="#fbd766"/></svg>
<div style="left:446px;top:537.4px;width:30px;height:1.6px;background:#8fbde9;"></div>
<span class="t" style="left:627.5px;top:519.942px;font:normal 8.6px 'Liberation Sans', sans-serif;letter-spacing:-0.172px;color:#e8e8e8;">Desktop</span>
<span class="t" style="left:661.4px;top:510.87px;font:bold 11px 'Liberation Sans', sans-serif;letter-spacing:0.675px;color:#fff;">»</span>
<svg style="left:719px;top:518px" width="18.6" height="15" viewBox="0 0 18.6 15"><circle cx="12.4" cy="5.2" r="4.6" fill="#f6a524"/><path d="M4 14.6Q0.4 14.4 0.4 11.2Q0.6 8.4 3.8 8.2Q5 4.8 8.6 5Q12 5.4 12.6 8.6Q16 8.4 16.4 11.4Q16.4 14.4 13.4 14.6Z" fill="#d4e3f5"/><path d="M4 14.6Q0.4 14.4 0.4 11.6Q4 13 8 12.4Q13 11.6 16.4 11.8Q16.2 14.4 13.4 14.6Z" fill="#a9c6ea"/></svg>
<span class="t" style="left:742px;top:519.512px;font:normal 9.6px 'Liberation Sans', sans-serif;letter-spacing:-0.212px;color:#fff;">33°C</span>
<span class="t" style="left:769px;top:519.512px;font:normal 9.6px 'Liberation Sans', sans-serif;letter-spacing:-0.212px;color:#fff;">Berawan</span>
<svg style="left:821.9px;top:521.4px" width="10" height="5.6" viewBox="0 0 10 5.6"><path d="M0.6 5.2L5 0.8L9.4 5.2" fill="none" stroke="#fff" stroke-width="1.1"/></svg>
<svg style="left:837.6px;top:519.8px" width="12.4" height="10" viewBox="0 0 12.4 10"><path d="M0.6 3.4H2.6L5.2 0.8V9.2L2.6 6.6H0.6Z" fill="none" stroke="#fff" stroke-width="0.9"/><path d="M7 3.2Q8.2 5 7 6.8M8.8 1.8Q11 5 8.8 8.2M10.6 0.6Q13.6 5 10.6 9.4" fill="none" stroke="#fff" stroke-width="0.8"/></svg>
<span class="t" style="left:858.4px;top:519.936px;font:normal 8.8px 'Liberation Sans', sans-serif;letter-spacing:-0.528px;color:#fff;">IND</span>
<span class="t" style="left:886px;top:512.636px;font:normal 8.8px 'Liberation Sans', sans-serif;letter-spacing:-0.528px;color:#fff;">2:32 PM</span>
<span class="t" style="left:882px;top:525.936px;font:normal 8.8px 'Liberation Sans', sans-serif;letter-spacing:-0.280px;color:#fff;">9/23/2024</span>
<svg style="left:930.8px;top:520px" width="15.4" height="15" viewBox="0 0 15.4 15"><path d="M0.6 0.6H10.6V8H4.6L2.4 10V8H0.6Z" fill="none" stroke="#fff" stroke-width="1"/><path d="M2.6 2.8H8.6M2.6 4.4H8.6M2.6 6H6.6" stroke="#fff" stroke-width="0.6"/><circle cx="11" cy="10.7" r="3.7" fill="#1f2226" stroke="#fff" stroke-width="0.8"/><text x="9.2" y="13.2" font-family="Liberation Sans, sans-serif" font-size="6.6" font-weight="bold" fill="#fff">4</text></svg>
<div style="left:956px;top:511px;width:0.8px;height:28px;background:#6a6a6a;"></div>
</body></html>
